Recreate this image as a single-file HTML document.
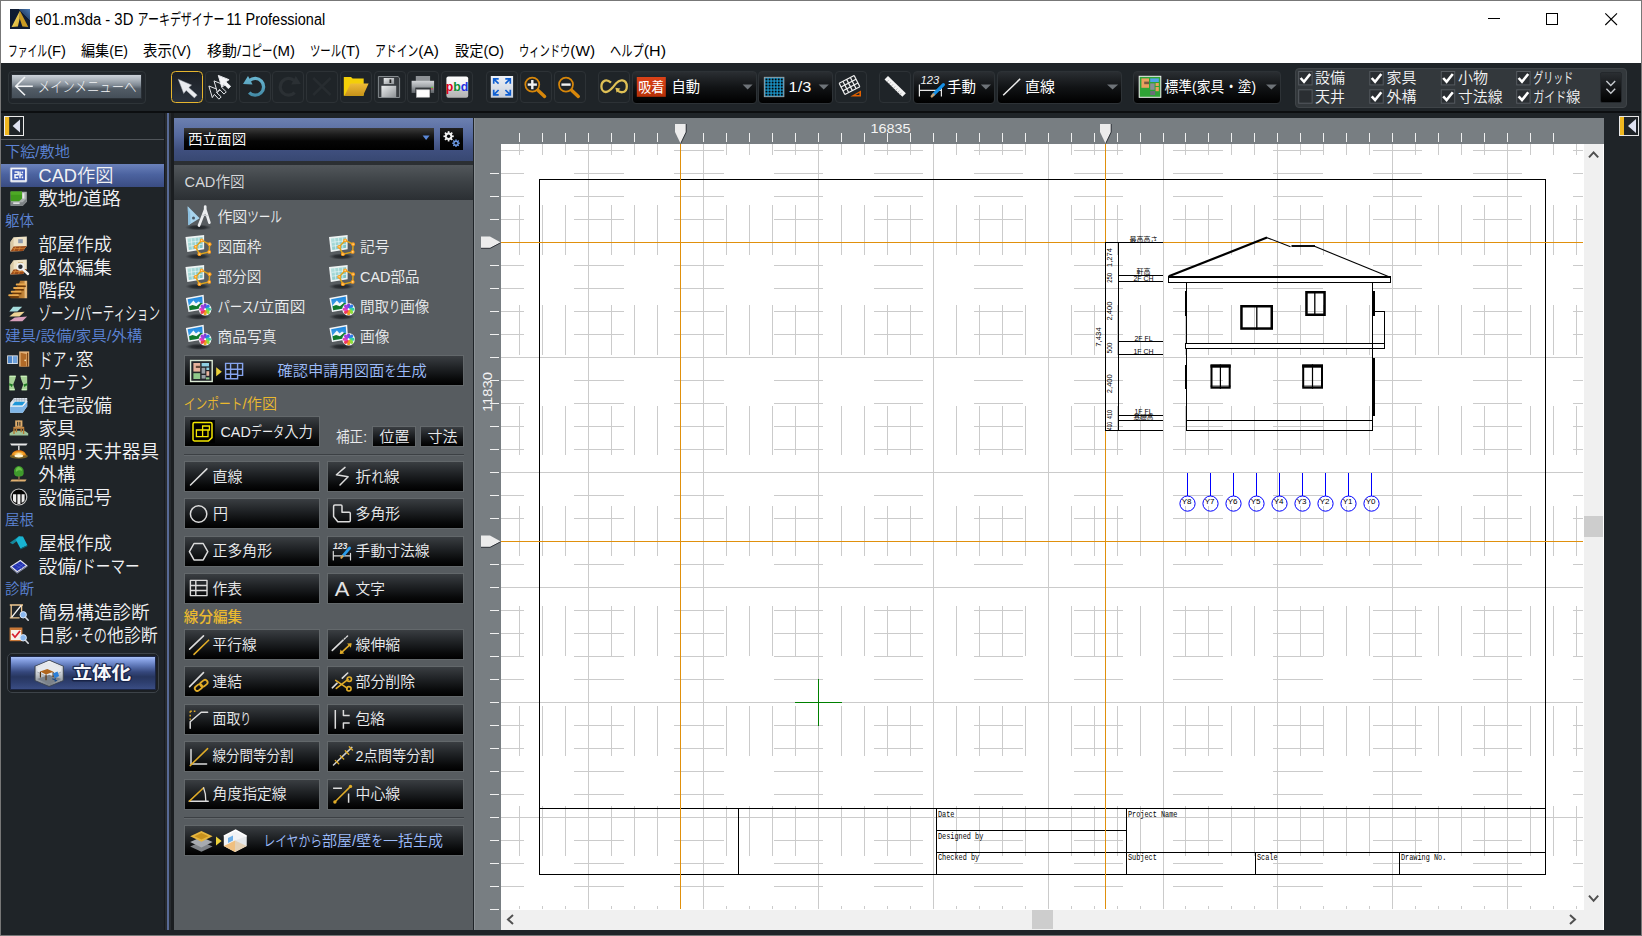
<!DOCTYPE html>
<html lang="ja"><head><meta charset="utf-8"><title>e01.m3da - 3D アーキデザイナー11 Professional</title>
<style>
html,body{margin:0;padding:0;background:#1f2428;}
#root{position:relative;width:1642px;height:936px;overflow:hidden;font-family:"Liberation Sans","Noto Sans CJK JP",sans-serif;}
#root div{position:absolute;}
svg{position:absolute;left:0;top:0;}
text{font-family:"Liberation Sans","Noto Sans CJK JP",sans-serif;white-space:pre;}
.mono{font-family:"Liberation Mono","IPAGothic",monospace;}
.btn{background:linear-gradient(#3a3e42,#202326 40%,#08090a 80%,#000);border:1px solid #63686b;box-sizing:border-box;}
.tb{border:1px solid #2d3236;border-radius:4px;box-sizing:border-box;background:#1f2428;}
.dd{border:1px solid #2d3236;border-radius:4px;box-sizing:border-box;background:linear-gradient(#2a2e32,#111315 50%,#000);}
</style></head><body><div id="root">
<div class="" style="left:0px;top:0px;width:1642px;height:936px;background:#1f2428"></div>
<div class="" style="left:0px;top:0px;width:1642px;height:63px;background:#fff"></div>
<div class="" style="left:1px;top:63px;width:1640px;height:50px;background:#1f2428"></div>
<div class="" style="left:1px;top:111px;width:1640px;height:2px;background:#0c0e10"></div>
<div class="" style="left:8px;top:71px;width:138px;height:33px;border:1px solid #2e3438;border-radius:4px;box-sizing:border-box;background:#20252a"></div>
<div class="" style="left:11.4px;top:74.4px;width:130.2px;height:25px;background:linear-gradient(#ccd2d9,#aab2ba 22%,#7f8993 45%,#525c66 60%,#444e58);border:1px solid #2a3036;box-sizing:border-box"></div>
<div class="" style="left:171px;top:71px;width:32px;height:32px;border:1.5px solid #e6b52e;border-radius:4.5px;box-sizing:border-box;background:linear-gradient(#1b1f25,#2a323d)"></div>
<div class="tb" style="left:204.8px;top:71px;width:32px;height:32px;"></div>
<div class="tb" style="left:238.5px;top:71px;width:32px;height:32px;"></div>
<div class="tb" style="left:272.3px;top:71px;width:32px;height:32px;"></div>
<div class="tb" style="left:306.3px;top:71px;width:32px;height:32px;"></div>
<div class="tb" style="left:339.6px;top:71px;width:32px;height:32px;"></div>
<div class="tb" style="left:373.5px;top:71px;width:32px;height:32px;"></div>
<div class="tb" style="left:407.2px;top:71px;width:32px;height:32px;"></div>
<div class="tb" style="left:441.2px;top:71px;width:32px;height:32px;"></div>
<div class="tb" style="left:486.3px;top:71px;width:32px;height:32px;"></div>
<div class="tb" style="left:519.8px;top:71px;width:32px;height:32px;"></div>
<div class="tb" style="left:553.5px;top:71px;width:32px;height:32px;"></div>
<div class="tb" style="left:598.2px;top:71px;width:32px;height:32px;"></div>
<div class="tb" style="left:834.5px;top:71px;width:32px;height:32px;"></div>
<div class="tb" style="left:879.3px;top:71px;width:32px;height:32px;"></div>
<div class="dd" style="left:631.5px;top:70.5px;width:125.20000000000005px;height:33px;"></div>
<div class="dd" style="left:757.6px;top:70.5px;width:75.39999999999998px;height:33px;"></div>
<div class="dd" style="left:912.5px;top:70.5px;width:82.70000000000005px;height:33px;"></div>
<div class="dd" style="left:996.5px;top:70.5px;width:125.79999999999995px;height:33px;"></div>
<div class="dd" style="left:1133.4px;top:70.5px;width:148.0999999999999px;height:33px;"></div>
<div class="" style="left:1294.5px;top:68px;width:332.5px;height:40px;background:#33383c;border:1px solid #3f4448;border-radius:4px;box-sizing:border-box"></div>
<div class="" style="left:1599.5px;top:72px;width:22.5px;height:30.5px;background:linear-gradient(#2a2e32,#000);border:1px solid #24282c;box-sizing:border-box;border-radius:2px"></div>
<div class="" style="left:1px;top:113px;width:163px;height:817px;background:#1f2428"></div>
<div class="" style="left:164px;top:113px;width:10px;height:817px;background:linear-gradient(90deg,#171a1d 0,#171a1d 1.2px,#262a2e 1.2px,#262a2e 3px,#52648f 3px,#5d709c 4px,#52648f 5px,#272b2f 5px,#272b2f 7.2px,#1a1d20 7.2px)"></div>
<div class="" style="left:1px;top:139px;width:163px;height:1px;background:#50555a"></div>
<div class="" style="left:1px;top:164px;width:163px;height:23px;background:linear-gradient(#6b82bb,#4c63a0 45%,#3a4c82)"></div>
<div class="" style="left:7px;top:653px;width:152.4px;height:40px;border:1.2px solid #3d4349;border-radius:5px;box-sizing:border-box;background:#1b1f23"></div>
<div class="" style="left:10.3px;top:656.3px;width:145.4px;height:33.5px;background:linear-gradient(#a9c1f7 0,#86a0e2 10%,#5d76b6 27%,#35477c 47%,#27365f 62%,#2e3f6f 80%,#3a4d84 100%);border:1px solid #1c2644;box-sizing:border-box"></div>
<div class="" style="left:174px;top:118px;width:298.7px;height:812px;background:#575c60"></div>
<div class="" style="left:174px;top:118px;width:298.7px;height:42.5px;background:linear-gradient(#6c80b0,#566a9f 40%,#3f4f7e 75%,#384872)"></div>
<div class="" style="left:174px;top:160.5px;width:298.7px;height:4.5px;background:#2b2f33"></div>
<div class="" style="left:174px;top:164.5px;width:298.7px;height:35.5px;background:linear-gradient(#52575b,#3c4145 50%,#2b2f33)"></div>
<div class="" style="left:183.8px;top:128px;width:250px;height:22px;background:linear-gradient(#3c3c3c,#1c1c1c 30%,#050505 60%,#000)"></div>
<div class="" style="left:440px;top:128px;width:22.6px;height:22px;background:linear-gradient(#202020,#050505 50%,#000)"></div>
<div class="btn" style="left:184px;top:355px;width:279.8px;height:31px;"></div>
<div class="btn" style="left:184px;top:416px;width:136.4px;height:31px;"></div>
<div class="btn" style="left:372px;top:426px;width:44.2px;height:21px;"></div>
<div class="btn" style="left:420.4px;top:426px;width:43.6px;height:21px;"></div>
<div class="" style="left:184px;top:453.5px;width:280px;height:1px;background:#3c4044"></div>
<div class="" style="left:184px;top:454.5px;width:280px;height:1px;background:#63686c"></div>
<div class="btn" style="left:184px;top:461px;width:136.4px;height:31px;"></div>
<div class="btn" style="left:327.4px;top:461px;width:136.4px;height:31px;"></div>
<div class="btn" style="left:184px;top:498px;width:136.4px;height:31px;"></div>
<div class="btn" style="left:327.4px;top:498px;width:136.4px;height:31px;"></div>
<div class="btn" style="left:184px;top:536px;width:136.4px;height:31px;"></div>
<div class="btn" style="left:327.4px;top:536px;width:136.4px;height:31px;"></div>
<div class="btn" style="left:184px;top:573px;width:136.4px;height:31px;"></div>
<div class="btn" style="left:327.4px;top:573px;width:136.4px;height:31px;"></div>
<div class="btn" style="left:184px;top:629px;width:136.4px;height:31px;"></div>
<div class="btn" style="left:327.4px;top:629px;width:136.4px;height:31px;"></div>
<div class="btn" style="left:184px;top:666px;width:136.4px;height:31px;"></div>
<div class="btn" style="left:327.4px;top:666px;width:136.4px;height:31px;"></div>
<div class="btn" style="left:184px;top:704px;width:136.4px;height:31px;"></div>
<div class="btn" style="left:327.4px;top:704px;width:136.4px;height:31px;"></div>
<div class="btn" style="left:184px;top:741px;width:136.4px;height:31px;"></div>
<div class="btn" style="left:327.4px;top:741px;width:136.4px;height:31px;"></div>
<div class="btn" style="left:184px;top:779px;width:136.4px;height:31px;"></div>
<div class="btn" style="left:327.4px;top:779px;width:136.4px;height:31px;"></div>
<div class="" style="left:184px;top:816.8px;width:280px;height:1px;background:#3c4044"></div>
<div class="" style="left:184px;top:817.8px;width:280px;height:1px;background:#63686c"></div>
<div class="btn" style="left:184px;top:825px;width:279.6px;height:31px;"></div>
<div class="" style="left:474px;top:118px;width:1130px;height:26px;background:#787e82"></div>
<div class="" style="left:474px;top:118px;width:27px;height:812px;background:#787e82"></div>
<div class="" style="left:474px;top:118px;width:1px;height:812px;background:#8b9195"></div>
<div class="" style="left:501px;top:144px;width:1083px;height:766px;background:#fff"></div>
<div class="" style="left:501px;top:909px;width:1103px;height:21px;background:#fff"></div>
<div class="" style="left:1584px;top:144px;width:20px;height:786px;background:#fff"></div>
<div class="" style="left:1584px;top:144px;width:19.4px;height:785.5px;background:#f0f0f0"></div>
<div class="" style="left:501px;top:910px;width:1102.4px;height:19.5px;background:#f0f0f0"></div>
<div class="" style="left:1584px;top:516px;width:19px;height:21px;background:#cdcdcd"></div>
<div class="" style="left:1032px;top:910px;width:21px;height:19px;background:#cdcdcd"></div>
<div class="" style="left:1604px;top:113px;width:37px;height:823px;background:#1f2428"></div>
<div class="" style="left:1px;top:930px;width:1603px;height:6px;background:#1f2428"></div>
<svg width="1642" height="936" viewBox="0 0 1642 936">
<defs><linearGradient id="gAi" x1="1" y1="0" x2=".35" y2=".65"><stop offset="0" stop-color="#4a7ab4"/><stop offset=".45" stop-color="#2a4870"/><stop offset=".46" stop-color="#111d33"/><stop offset="1" stop-color="#0e1a30"/></linearGradient>
<linearGradient id="gAl" x1="0" y1="0" x2="1" y2="1"><stop offset="0" stop-color="#f6e578"/><stop offset="1" stop-color="#d9ab2c"/></linearGradient>
<linearGradient id="gUndo" gradientUnits="userSpaceOnUse" x1="0" y1="-11" x2="0" y2="11"><stop offset="0" stop-color="#6cb9d4"/><stop offset="1" stop-color="#3f86a2"/></linearGradient>
<linearGradient id="gFo" x1="0" y1="0" x2="0" y2="1"><stop offset="0" stop-color="#eebc38"/><stop offset="1" stop-color="#c8921a"/></linearGradient>
<linearGradient id="gFl" x1="0" y1="0" x2="1" y2="1"><stop offset="0" stop-color="#eceeef"/><stop offset="1" stop-color="#8e9296"/></linearGradient>
<linearGradient id="gPr" x1="0" y1="0" x2="0" y2="1"><stop offset="0" stop-color="#d2d5d8"/><stop offset=".45" stop-color="#a3a7ab"/><stop offset="1" stop-color="#5c6166"/></linearGradient>
<linearGradient id="gPb" x1="0" y1="0" x2="0" y2="1"><stop offset="0" stop-color="#fdfdfd"/><stop offset=".62" stop-color="#ececec"/><stop offset=".66" stop-color="#c4c4c4"/><stop offset="1" stop-color="#b4b4b4"/></linearGradient>
<linearGradient id="gFi" x1="0" y1="0" x2="0" y2="1"><stop offset="0" stop-color="#eef1f6"/><stop offset="1" stop-color="#c6cedb"/></linearGradient>
<linearGradient id="gRed" x1="0" y1="0" x2="0" y2="1"><stop offset="0" stop-color="#dc4218"/><stop offset="1" stop-color="#b63008"/></linearGradient>
<linearGradient id="gSt" x1="0" y1="0" x2="1" y2="0"><stop offset="0" stop-color="#8a4e14"/><stop offset=".8" stop-color="#c4873a"/><stop offset=".93" stop-color="#f2cf9a"/><stop offset="1" stop-color="#c4873a"/></linearGradient>
<radialGradient id="gLamp" cx=".5" cy=".7" r=".7"><stop offset="0" stop-color="#fff3b0"/><stop offset=".5" stop-color="#f09a20"/><stop offset="1" stop-color="#c8600c"/></radialGradient>
<linearGradient id="gHex" x1="0" y1="0" x2="0" y2="1"><stop offset="0" stop-color="#f2f4f6"/><stop offset=".5" stop-color="#c9ced4"/><stop offset="1" stop-color="#6f767e"/></linearGradient>
<radialGradient id="gSh"><stop offset="0" stop-color="#1f2327"/><stop offset=".55" stop-color="#2a2e32" stop-opacity=".9"/><stop offset="1" stop-color="#3a3e42" stop-opacity="0"/></radialGradient>
<linearGradient id="gSheet" x1="0" y1="0" x2="1" y2="1"><stop offset="0" stop-color="#bfe6e4"/><stop offset="1" stop-color="#6fbcbc"/></linearGradient>
<linearGradient id="gSky" x1="0" y1="0" x2="0" y2="1"><stop offset="0" stop-color="#1c84dc"/><stop offset="1" stop-color="#58b4f0"/></linearGradient></defs>
<g><rect x="10" y="9" width="20" height="20" fill="url(#gAi)"/><path d="M19.9 10.8 L11.6 27 L17.9 26.6 L19.7 18.6 Z" fill="url(#gAl)"/><path d="M19.9 10.8 L19.7 18.6 L22.4 26.6 L28.3 27 Z" fill="#c99a22"/></g>
<text y="24.82" font-size="15.6" fill="#000"><tspan x="35.1" textLength="102.4" lengthAdjust="spacingAndGlyphs">e01.m3da - 3D </tspan><tspan x="137.6" textLength="87" lengthAdjust="spacingAndGlyphs">アーキデザイナー</tspan><tspan x="226.5" textLength="98.7" lengthAdjust="spacingAndGlyphs">11 Professional</tspan></text>
<line x1="1488" y1="18.5" x2="1500" y2="18.5" stroke="#000" stroke-width="1" />
<rect x="1546.5" y="13.5" width="11" height="11" fill="none" stroke="#000" stroke-width="1"/>
<path d="M1605.3 13.3 L1617 25 M1617 13.3 L1605.3 25" stroke="#000" stroke-width="1.1" fill="none"/>
<text y="55.7" font-size="15" fill="#000"><tspan x="8" textLength="39.14" lengthAdjust="spacingAndGlyphs">ファイル</tspan><tspan x="47.14" textLength="18.86" lengthAdjust="spacingAndGlyphs">(F)</tspan></text>
<text y="55.7" font-size="15" fill="#000"><tspan x="81" textLength="28.2" lengthAdjust="spacingAndGlyphs">編集</tspan><tspan x="109.2" textLength="18.8" lengthAdjust="spacingAndGlyphs">(E)</tspan></text>
<text y="55.7" font-size="15" fill="#000"><tspan x="143" textLength="28.8" lengthAdjust="spacingAndGlyphs">表示</tspan><tspan x="171.8" textLength="19.2" lengthAdjust="spacingAndGlyphs">(V)</tspan></text>
<text y="55.7" font-size="15" fill="#000"><tspan x="207" textLength="29.95" lengthAdjust="spacingAndGlyphs">移動</tspan><tspan x="236.95" textLength="4.16" lengthAdjust="spacingAndGlyphs">/</tspan><tspan x="241.11" textLength="31.45" lengthAdjust="spacingAndGlyphs">コピー</tspan><tspan x="272.56" textLength="22.45" lengthAdjust="spacingAndGlyphs">(M)</tspan></text>
<text y="55.7" font-size="15" fill="#000"><tspan x="310" textLength="31.1" lengthAdjust="spacingAndGlyphs">ツール</tspan><tspan x="341.1" textLength="18.9" lengthAdjust="spacingAndGlyphs">(T)</tspan></text>
<text y="55.7" font-size="15" fill="#000"><tspan x="375" textLength="43.36" lengthAdjust="spacingAndGlyphs">アドイン</tspan><tspan x="418.36" textLength="20.64" lengthAdjust="spacingAndGlyphs">(A)</tspan></text>
<text y="55.7" font-size="15" fill="#000"><tspan x="455" textLength="28.46" lengthAdjust="spacingAndGlyphs">設定</tspan><tspan x="483.46" textLength="20.54" lengthAdjust="spacingAndGlyphs">(O)</tspan></text>
<text y="55.7" font-size="15" fill="#000"><tspan x="519" textLength="51.33" lengthAdjust="spacingAndGlyphs">ウィンドウ</tspan><tspan x="570.33" textLength="24.67" lengthAdjust="spacingAndGlyphs">(W)</tspan></text>
<text y="55.7" font-size="15" fill="#000"><tspan x="610" textLength="33.71" lengthAdjust="spacingAndGlyphs">ヘルプ</tspan><tspan x="643.71" textLength="22.29" lengthAdjust="spacingAndGlyphs">(H)</tspan></text>
<path d="M32.8 86.2 H16.4 M25 77 L15.8 86.2 L25 95.2" fill="none" stroke="#f1f3f5" stroke-width="1.6"/>
<text x="37.8" y="92.0" font-size="15" fill="#f2f4f6" textLength="98.7" lengthAdjust="spacingAndGlyphs" font-weight="300" >メインメニューへ</text>
<path d="M178.2 79.2 L191.6 85 L188.8 87.6 L197.2 95 L194.4 97.9 L186.2 90.4 L183.7 93.5 Z" fill="#e9ebef" stroke="#9aa0a8" stroke-width=".5"/>
<path d="M208.9 86.0 L219.7 90.3 L216.4 92.4 L221.2 96.9 L218.9 99.2 L214.4 94.4 L212.3 97.6 Z" fill="#1f2428" stroke="#e6e8ec" stroke-width="1"/>
<path d="M214.0 80.9 L224.8 85.2 L221.5 87.3 L226.3 91.8 L224.0 94.1 L219.5 89.3 L217.4 92.5 Z" fill="#1f2428" stroke="#e6e8ec" stroke-width="1"/>
<path d="M218.3 75.4 L229.1 79.7 L225.8 81.8 L230.6 86.3 L228.3 88.6 L223.8 83.8 L221.7 87.0 Z" fill="#f4f5f7" stroke="#e6e8ec" stroke-width="1"/>
<g transform="translate(255.2,86.8)"><path d="M-5.62 -6.24 A8.4 8.4 0 1 1 -6.04 5.84" fill="none" stroke="url(#gUndo)" stroke-width="3.3"/><path d="M-12.2 -2.8 L-7.2 -10.8 L-2.6 -2.4 Z" fill="url(#gUndo)"/></g>
<g transform="translate(288.6,86.8) scale(-1,1)"><path d="M-5.62 -6.24 A8.4 8.4 0 1 1 -6.04 5.84" fill="none" stroke="#2b3034" stroke-width="3.3"/><path d="M-12.2 -2.8 L-7.2 -10.8 L-2.6 -2.4 Z" fill="#2b3034"/></g>
<path d="M313.2 78 L330.6 95 M330.6 78 L313.2 95" stroke="#272c30" stroke-width="2.6" fill="none"/>
<path d="M343.8 77 H351 L352.6 78.6 H363.7 V95.8 H343.8 Z" fill="#f3cf08"/><path d="M350.6 83.4 H368.6 L363 95.8 H344.4 Z" fill="url(#gFo)"/>
<path d="M378.4 76.5 H398 L399.6 78 V97.5 H378.4 Z" fill="#373b3f" stroke="#858a8e" stroke-width="1"/><rect x="383.7" y="78" width="10.4" height="6.1" fill="url(#gFl)"/><rect x="389.5" y="79.4" width="1.8" height="3.6" fill="#222"/><rect x="381.4" y="85.8" width="14.8" height="11.2" fill="url(#gFl)"/>
<rect x="415.8" y="76" width="14.3" height="5" fill="#8d9195"/><rect x="411.6" y="80.8" width="22.5" height="12.2" fill="url(#gPr)"/><rect x="415.3" y="87.6" width="15.6" height="5.6" fill="#33373b"/><rect x="416.6" y="89.8" width="13" height="7.4" fill="#fff" stroke="#c9c9c9" stroke-width=".6"/><rect x="431.3" y="86.8" width="1.6" height="1.2" fill="#58d030"/><rect x="431.3" y="88.2" width="1.6" height="1.2" fill="#d03048"/>
<rect x="446.4" y="76.4" width="21.8" height="21.3" rx="2" fill="url(#gPb)"/>
<text x="445.8" y="90.6" font-size="13.5" font-weight="bold" textLength="22.6" lengthAdjust="spacingAndGlyphs"><tspan fill="#e1001a">p</tspan><tspan fill="#0e8f35">b</tspan><tspan fill="#2431e0">d</tspan></text>
<rect x="490.8" y="76" width="22.3" height="21.7" fill="url(#gFi)"/><g fill="none" stroke="#0f5fd2" stroke-width="1.7"><path d="M498.6 83.6 L493.7 78.8 M498.7 78.8 H493.7 V83.8"/><path d="M505.4 83.6 L510.3 78.8 M505.3 78.8 H510.3 V83.8"/><path d="M498.6 90.0 L493.7 94.8 M498.7 94.8 H493.7 V89.8"/><path d="M505.4 90.0 L510.3 94.8 M505.3 94.8 H510.3 V89.8"/></g>
<circle cx="532.3" cy="84.6" r="7" fill="#1f2428" stroke="#d8870a" stroke-width="1.7"/><path d="M537.9 90.19999999999999 L544.5999999999999 96.39999999999999" stroke="#d8870a" stroke-width="3.4" stroke-linecap="round"/><path d="M527.6999999999999 84.6 H536.9" stroke="#f2f2f2" stroke-width="2.4"/><path d="M532.3 80.0 V89.19999999999999" stroke="#f2f2f2" stroke-width="2.4"/>
<circle cx="566" cy="84.6" r="7" fill="#1f2428" stroke="#d8870a" stroke-width="1.7"/><path d="M571.6 90.19999999999999 L578.3 96.39999999999999" stroke="#d8870a" stroke-width="3.4" stroke-linecap="round"/><path d="M561.4 84.6 H570.6" stroke="#f2f2f2" stroke-width="2.4"/>
<path d="M611 82.6 C608.8 80.6 606.8 80 605 80.6 C602.6 81.4 601.4 83.8 601.4 86.4 C601.4 89.2 603 91.8 605.6 92 C608 92.2 610 90.6 612.6 87.6 L616 83.4 C618 81 620 79.9 622.4 80.4 C625.2 81 626.8 83.6 626.8 86.4 C626.8 89.4 625.2 91.9 622.4 92.2 C620.6 92.4 619 91.8 617.4 90.4" fill="none" stroke="#dfc055" stroke-width="2.3"/><path d="M615.4 87.8 L620.4 88.6 L616.6 92.8 Z" fill="#dfc055"/>
<rect x="636.8" y="77" width="29" height="19.8" fill="url(#gRed)" />
<text x="638.3" y="91.94" font-size="14" fill="#fff" textLength="26" lengthAdjust="spacingAndGlyphs" >吸着</text>
<text x="671.4" y="92.0" font-size="15" fill="#fff" textLength="28.6" lengthAdjust="spacingAndGlyphs" >自動</text>
<path d="M742.6 84.4 H752.6 L747.6 89.4 Z" fill="#6e7378"/>
<rect x="764.3" y="77.3" width="19.6" height="19.4" fill="#1ea7e2" stroke="#9ea2a6" stroke-width=".9"/><g fill="#050505"><rect x="765.50" y="78.50" width="2" height="2"/><rect x="765.50" y="81.52" width="2" height="2"/><rect x="765.50" y="84.54" width="2" height="2"/><rect x="765.50" y="87.56" width="2" height="2"/><rect x="765.50" y="90.58" width="2" height="2"/><rect x="765.50" y="93.60" width="2" height="2"/><rect x="768.55" y="78.50" width="2" height="2"/><rect x="768.55" y="81.52" width="2" height="2"/><rect x="768.55" y="84.54" width="2" height="2"/><rect x="768.55" y="87.56" width="2" height="2"/><rect x="768.55" y="90.58" width="2" height="2"/><rect x="768.55" y="93.60" width="2" height="2"/><rect x="771.60" y="78.50" width="2" height="2"/><rect x="771.60" y="81.52" width="2" height="2"/><rect x="771.60" y="84.54" width="2" height="2"/><rect x="771.60" y="87.56" width="2" height="2"/><rect x="771.60" y="90.58" width="2" height="2"/><rect x="771.60" y="93.60" width="2" height="2"/><rect x="774.65" y="78.50" width="2" height="2"/><rect x="774.65" y="81.52" width="2" height="2"/><rect x="774.65" y="84.54" width="2" height="2"/><rect x="774.65" y="87.56" width="2" height="2"/><rect x="774.65" y="90.58" width="2" height="2"/><rect x="774.65" y="93.60" width="2" height="2"/><rect x="777.70" y="78.50" width="2" height="2"/><rect x="777.70" y="81.52" width="2" height="2"/><rect x="777.70" y="84.54" width="2" height="2"/><rect x="777.70" y="87.56" width="2" height="2"/><rect x="777.70" y="90.58" width="2" height="2"/><rect x="777.70" y="93.60" width="2" height="2"/><rect x="780.75" y="78.50" width="2" height="2"/><rect x="780.75" y="81.52" width="2" height="2"/><rect x="780.75" y="84.54" width="2" height="2"/><rect x="780.75" y="87.56" width="2" height="2"/><rect x="780.75" y="90.58" width="2" height="2"/><rect x="780.75" y="93.60" width="2" height="2"/></g>
<text x="788.6" y="92.38" font-size="15.5" fill="#fff" textLength="22.6" lengthAdjust="spacingAndGlyphs" >1/3</text>
<path d="M818.6 84.4 H828.8 L823.7 89.4 Z" fill="#6e7378"/>
<g transform="translate(849.5,85) rotate(-27)" stroke="#f1f1f1" stroke-width="1.2" fill="none"><line x1="-8.4" y1="-6.3" x2="-8.4" y2="6.3"/><line x1="-4.2" y1="-6.3" x2="-4.2" y2="6.3"/><line x1="0.0" y1="-6.3" x2="0.0" y2="6.3"/><line x1="4.200000000000001" y1="-6.3" x2="4.200000000000001" y2="6.3"/><line x1="8.4" y1="-6.3" x2="8.4" y2="6.3"/><line x1="-8.4" y1="-6.3" x2="8.4" y2="-6.3"/><line x1="-8.4" y1="-2.0999999999999996" x2="8.4" y2="-2.0999999999999996"/><line x1="-8.4" y1="2.1000000000000005" x2="8.4" y2="2.1000000000000005"/><line x1="-8.4" y1="6.300000000000002" x2="8.4" y2="6.300000000000002"/></g><path d="M850.4 96.6 H861 V90.4 Z" fill="#e26100"/><path d="M855.4 95 H859.4 V92.8 Z" fill="#1f2428"/>
<g transform="translate(895.2,86.4) rotate(44)"><rect x="-12.4" y="-2.5" width="24.8" height="5" fill="#f3f3f3"/><line x1="-9" y1="0" x2="-9" y2="2.5" stroke="#b5b5b5" stroke-width=".9"/><line x1="-6" y1="0" x2="-6" y2="2.5" stroke="#b5b5b5" stroke-width=".9"/><line x1="-3" y1="0" x2="-3" y2="2.5" stroke="#b5b5b5" stroke-width=".9"/><line x1="0" y1="0" x2="0" y2="2.5" stroke="#b5b5b5" stroke-width=".9"/><line x1="3" y1="0" x2="3" y2="2.5" stroke="#b5b5b5" stroke-width=".9"/><line x1="6" y1="0" x2="6" y2="2.5" stroke="#b5b5b5" stroke-width=".9"/><line x1="9" y1="0" x2="9" y2="2.5" stroke="#b5b5b5" stroke-width=".9"/></g>
<text x="920.6" y="83.8" font-size="10.5" font-style="italic" fill="#f3f3f3" textLength="18.6" lengthAdjust="spacingAndGlyphs">123</text>
<path d="M919.4 84.6 V96.6 M941.4 88 V96.6 M919.4 90.4 H941.4" stroke="#e9e9e9" stroke-width="1.2" fill="none"/><path d="M943.4 84.6 L933.4 94.6" stroke="#1590e6" stroke-width="3.2" stroke-linecap="round"/><path d="M933.6 94.4 L931.8 96.4" stroke="#c8a070" stroke-width="2.4" stroke-linecap="round"/>
<text x="947" y="91.9" font-size="15" fill="#fff" textLength="29" lengthAdjust="spacingAndGlyphs" >手動</text>
<path d="M980.8 84.4 H991 L985.9 89.4 Z" fill="#6e7378"/>
<path d="M1003.2 95.2 L1020.2 78.8" stroke="#ededed" stroke-width="1.5"/>
<text x="1024.9" y="91.9" font-size="15" fill="#fff" textLength="30" lengthAdjust="spacingAndGlyphs" >直線</text>
<path d="M1107 84.4 H1118.2 L1112.6 89.4 Z" fill="#6e7378"/>
<rect x="1139.2" y="76.3" width="21.6" height="21" fill="#2fa336" stroke="#f4f4f4" stroke-width="1"/><rect x="1141.4" y="78.4" width="7.6" height="9.4" fill="#eba05e"/><rect x="1144.2" y="81.6" width="4.8" height="2.6" fill="#7a5a40"/><rect x="1150.2" y="78.4" width="8.6" height="3.6" fill="#4fa2ea"/><rect x="1155.6" y="83" width="3.2" height="3" fill="#eba05e"/><rect x="1150.2" y="83.4" width="4.4" height="6.4" fill="#8a8f98"/><rect x="1155.6" y="87" width="3.2" height="4.2" fill="#eba05e"/><rect x="1150.2" y="91" width="5" height="4" fill="#6a7078"/>
<text x="1164.6" y="91.9" font-size="15" fill="#fff" textLength="91.6" lengthAdjust="spacingAndGlyphs" >標準(家具・塗)</text>
<path d="M1266 84.4 H1276.8 L1271.4 89.4 Z" fill="#6e7378"/>
<rect x="1298.7" y="71.5" width="13.4" height="13.4" fill="#2a2e32" stroke="#565b60" stroke-width="1"/>
<path d="M1300.6000000000001 78.0 L1304.0 81.8 L1310.2 74.0" fill="none" stroke="#fff" stroke-width="2.6"/>
<text y="83.42" font-size="14.5" fill="#f4f4f4" font-weight="350"><tspan x="1315" textLength="30.0" lengthAdjust="spacingAndGlyphs">設備</tspan></text>
<rect x="1298.7" y="89.8" width="13.4" height="13.4" fill="#2a2e32" stroke="#565b60" stroke-width="1"/>
<text y="101.72" font-size="14.5" fill="#f4f4f4" font-weight="350"><tspan x="1315" textLength="30.0" lengthAdjust="spacingAndGlyphs">天井</tspan></text>
<rect x="1369.8" y="71.5" width="13.4" height="13.4" fill="#2a2e32" stroke="#565b60" stroke-width="1"/>
<path d="M1371.7 78.0 L1375.1 81.8 L1381.3 74.0" fill="none" stroke="#fff" stroke-width="2.6"/>
<text y="83.42" font-size="14.5" fill="#f4f4f4" font-weight="350"><tspan x="1386.5" textLength="30.0" lengthAdjust="spacingAndGlyphs">家具</tspan></text>
<rect x="1369.8" y="89.8" width="13.4" height="13.4" fill="#2a2e32" stroke="#565b60" stroke-width="1"/>
<path d="M1371.7 96.3 L1375.1 100.1 L1381.3 92.3" fill="none" stroke="#fff" stroke-width="2.6"/>
<text y="101.72" font-size="14.5" fill="#f4f4f4" font-weight="350"><tspan x="1386.5" textLength="30.0" lengthAdjust="spacingAndGlyphs">外構</tspan></text>
<rect x="1441.3" y="71.5" width="13.4" height="13.4" fill="#2a2e32" stroke="#565b60" stroke-width="1"/>
<path d="M1443.2 78.0 L1446.6 81.8 L1452.8 74.0" fill="none" stroke="#fff" stroke-width="2.6"/>
<text y="83.42" font-size="14.5" fill="#f4f4f4" font-weight="350"><tspan x="1458" textLength="30.0" lengthAdjust="spacingAndGlyphs">小物</tspan></text>
<rect x="1441.3" y="89.8" width="13.4" height="13.4" fill="#2a2e32" stroke="#565b60" stroke-width="1"/>
<path d="M1443.2 96.3 L1446.6 100.1 L1452.8 92.3" fill="none" stroke="#fff" stroke-width="2.6"/>
<text y="101.72" font-size="14.5" fill="#f4f4f4" font-weight="350"><tspan x="1458" textLength="44.5" lengthAdjust="spacingAndGlyphs">寸法線</tspan></text>
<rect x="1516.7" y="71.5" width="13.4" height="13.4" fill="#2a2e32" stroke="#565b60" stroke-width="1"/>
<path d="M1518.6000000000001 78.0 L1522.0 81.8 L1528.2 74.0" fill="none" stroke="#fff" stroke-width="2.6"/>
<text y="83.42" font-size="14.5" fill="#f4f4f4" font-weight="350"><tspan x="1533.2" textLength="40.0" lengthAdjust="spacingAndGlyphs">グリッド</tspan></text>
<rect x="1516.7" y="89.8" width="13.4" height="13.4" fill="#2a2e32" stroke="#565b60" stroke-width="1"/>
<path d="M1518.6000000000001 96.3 L1522.0 100.1 L1528.2 92.3" fill="none" stroke="#fff" stroke-width="2.6"/>
<text y="101.72" font-size="14.5" fill="#f4f4f4" font-weight="350"><tspan x="1533.2" textLength="32.93" lengthAdjust="spacingAndGlyphs">ガイド</tspan><tspan x="1566.13" textLength="14.07" lengthAdjust="spacingAndGlyphs">線</tspan></text>
<path d="M1606.4 81 L1610.8 85.4 L1615.2 81 M1606.4 88.8 L1610.8 93.2 L1615.2 88.8" fill="none" stroke="#c9cdd1" stroke-width="1.4"/>
<g><rect x="4.5" y="116.5" width="19" height="19" fill="#1f2428" stroke="#ececec" stroke-width="1"/><rect x="5" y="117" width="4.2" height="18" fill="#f0b820"/><path d="M20 119.4 L20 132.6 L12.6 126 Z" fill="#dfe3f2"/></g>
<text y="157.32" font-size="14.5" fill="#5d84d6" font-weight="350"><tspan x="5" textLength="30.39" lengthAdjust="spacingAndGlyphs">下絵</tspan><tspan x="35.39" textLength="4.22" lengthAdjust="spacingAndGlyphs">/</tspan><tspan x="39.61" textLength="30.39" lengthAdjust="spacingAndGlyphs">敷地</tspan></text>
<text y="181.72" font-size="18.4" fill="#f1f2f4" font-weight="350"><tspan x="38.5" textLength="38.52" lengthAdjust="spacingAndGlyphs">CAD</tspan><tspan x="77.02" textLength="36.48" lengthAdjust="spacingAndGlyphs">作図</tspan></text>
<text y="204.72" font-size="18.4" fill="#f1f2f4" font-weight="350"><tspan x="38.5" textLength="38.57" lengthAdjust="spacingAndGlyphs">敷地</tspan><tspan x="77.07" textLength="5.36" lengthAdjust="spacingAndGlyphs">/</tspan><tspan x="82.43" textLength="38.57" lengthAdjust="spacingAndGlyphs">道路</tspan></text>
<text y="226.32" font-size="14.5" fill="#5d84d6" font-weight="350"><tspan x="5" textLength="29.0" lengthAdjust="spacingAndGlyphs">躯体</tspan></text>
<text y="250.72" font-size="18.4" fill="#f1f2f4" font-weight="350"><tspan x="38.5" textLength="73.5" lengthAdjust="spacingAndGlyphs">部屋作成</tspan></text>
<text y="273.72" font-size="18.4" fill="#f1f2f4" font-weight="350"><tspan x="38.5" textLength="73.5" lengthAdjust="spacingAndGlyphs">躯体編集</tspan></text>
<text y="296.72" font-size="18.4" fill="#f1f2f4" font-weight="350"><tspan x="38.5" textLength="37.0" lengthAdjust="spacingAndGlyphs">階段</tspan></text>
<text y="319.72" font-size="18.4" fill="#f1f2f4" font-weight="350"><tspan x="38.5" textLength="36.84" lengthAdjust="spacingAndGlyphs">ゾーン</tspan><tspan x="75.34" textLength="4.37" lengthAdjust="spacingAndGlyphs">/</tspan><tspan x="79.71" textLength="80.29" lengthAdjust="spacingAndGlyphs">パーティション</tspan></text>
<text y="341.32" font-size="14.5" fill="#5d84d6" font-weight="350"><tspan x="5" textLength="31.09" lengthAdjust="spacingAndGlyphs">建具</tspan><tspan x="36.09" textLength="4.32" lengthAdjust="spacingAndGlyphs">/</tspan><tspan x="40.41" textLength="31.09" lengthAdjust="spacingAndGlyphs">設備</tspan><tspan x="71.5" textLength="4.32" lengthAdjust="spacingAndGlyphs">/</tspan><tspan x="75.82" textLength="31.09" lengthAdjust="spacingAndGlyphs">家具</tspan><tspan x="106.91" textLength="4.32" lengthAdjust="spacingAndGlyphs">/</tspan><tspan x="111.23" textLength="31.09" lengthAdjust="spacingAndGlyphs">外構</tspan></text>
<text y="365.72" font-size="18.4" fill="#f1f2f4" font-weight="350"><tspan x="38.5" textLength="28.04" lengthAdjust="spacingAndGlyphs">ドア</tspan><tspan x="66.54" textLength="8.99" lengthAdjust="spacingAndGlyphs">・</tspan><tspan x="75.53" textLength="17.97" lengthAdjust="spacingAndGlyphs">窓</tspan></text>
<text y="388.72" font-size="18.4" fill="#f1f2f4" font-weight="350"><tspan x="38.5" textLength="55.0" lengthAdjust="spacingAndGlyphs">カーテン</tspan></text>
<text y="411.72" font-size="18.4" fill="#f1f2f4" font-weight="350"><tspan x="38.5" textLength="73.5" lengthAdjust="spacingAndGlyphs">住宅設備</tspan></text>
<text y="434.72" font-size="18.4" fill="#f1f2f4" font-weight="350"><tspan x="38.5" textLength="37.0" lengthAdjust="spacingAndGlyphs">家具</tspan></text>
<text y="457.72" font-size="18.4" fill="#f1f2f4" font-weight="350"><tspan x="38.5" textLength="37.08" lengthAdjust="spacingAndGlyphs">照明</tspan><tspan x="75.58" textLength="9.27" lengthAdjust="spacingAndGlyphs">・</tspan><tspan x="84.85" textLength="74.15" lengthAdjust="spacingAndGlyphs">天井器具</tspan></text>
<text y="480.72" font-size="18.4" fill="#f1f2f4" font-weight="350"><tspan x="38.5" textLength="37.0" lengthAdjust="spacingAndGlyphs">外構</tspan></text>
<text y="503.72" font-size="18.4" fill="#f1f2f4" font-weight="350"><tspan x="38.5" textLength="73.5" lengthAdjust="spacingAndGlyphs">設備記号</tspan></text>
<text y="525.32" font-size="14.5" fill="#5d84d6" font-weight="350"><tspan x="5" textLength="29.0" lengthAdjust="spacingAndGlyphs">屋根</tspan></text>
<text y="549.72" font-size="18.4" fill="#f1f2f4" font-weight="350"><tspan x="38.5" textLength="73.5" lengthAdjust="spacingAndGlyphs">屋根作成</tspan></text>
<text y="572.72" font-size="18.4" fill="#f1f2f4" font-weight="350"><tspan x="38.5" textLength="37.5" lengthAdjust="spacingAndGlyphs">設備</tspan><tspan x="76.0" textLength="5.21" lengthAdjust="spacingAndGlyphs">/</tspan><tspan x="81.21" textLength="58.49" lengthAdjust="spacingAndGlyphs">ドーマー</tspan></text>
<text y="594.32" font-size="14.5" fill="#5d84d6" font-weight="350"><tspan x="5" textLength="29.0" lengthAdjust="spacingAndGlyphs">診断</tspan></text>
<text y="618.72" font-size="18.4" fill="#f1f2f4" font-weight="350"><tspan x="38.5" textLength="111.0" lengthAdjust="spacingAndGlyphs">簡易構造診断</tspan></text>
<text y="641.72" font-size="18.4" fill="#f1f2f4" font-weight="350"><tspan x="38.5" textLength="33.77" lengthAdjust="spacingAndGlyphs">日影</tspan><tspan x="72.27" textLength="8.44" lengthAdjust="spacingAndGlyphs">・</tspan><tspan x="80.71" textLength="26.34" lengthAdjust="spacingAndGlyphs">その</tspan><tspan x="107.05" textLength="50.65" lengthAdjust="spacingAndGlyphs">他診断</tspan></text>
<text x="72.4" y="679.16" font-size="17.4" fill="#f6f7fb" textLength="58.6" lengthAdjust="spacingAndGlyphs" font-weight="bold" stroke="#121b3c" stroke-opacity=".75" stroke-width="2.6" paint-order="stroke" stroke-linejoin="round">立体化</text>
<text x="188" y="143.71" font-size="14.2" fill="#fff" textLength="58.2" lengthAdjust="spacingAndGlyphs" font-weight="350" >西立面図</text>
<path d="M422.6 135.6 H429.6 L426.1 140 Z" fill="#5b88d8"/>
<g transform="translate(448.6,136.3)"><rect x="-0.86" y="-5.15" width="1.72" height="2.34" fill="#f2f2f2" transform="rotate(0)"/><rect x="-0.86" y="-5.15" width="1.72" height="2.34" fill="#f2f2f2" transform="rotate(45)"/><rect x="-0.86" y="-5.15" width="1.72" height="2.34" fill="#f2f2f2" transform="rotate(90)"/><rect x="-0.86" y="-5.15" width="1.72" height="2.34" fill="#f2f2f2" transform="rotate(135)"/><rect x="-0.86" y="-5.15" width="1.72" height="2.34" fill="#f2f2f2" transform="rotate(180)"/><rect x="-0.86" y="-5.15" width="1.72" height="2.34" fill="#f2f2f2" transform="rotate(225)"/><rect x="-0.86" y="-5.15" width="1.72" height="2.34" fill="#f2f2f2" transform="rotate(270)"/><rect x="-0.86" y="-5.15" width="1.72" height="2.34" fill="#f2f2f2" transform="rotate(315)"/><circle r="3.70" fill="#f2f2f2"/><circle r="1.7" fill="#08090b"/></g>
<g transform="translate(456,143.2)"><rect x="-0.64" y="-3.83" width="1.28" height="1.74" fill="#6d9be6" transform="rotate(0)"/><rect x="-0.64" y="-3.83" width="1.28" height="1.74" fill="#6d9be6" transform="rotate(45)"/><rect x="-0.64" y="-3.83" width="1.28" height="1.74" fill="#6d9be6" transform="rotate(90)"/><rect x="-0.64" y="-3.83" width="1.28" height="1.74" fill="#6d9be6" transform="rotate(135)"/><rect x="-0.64" y="-3.83" width="1.28" height="1.74" fill="#6d9be6" transform="rotate(180)"/><rect x="-0.64" y="-3.83" width="1.28" height="1.74" fill="#6d9be6" transform="rotate(225)"/><rect x="-0.64" y="-3.83" width="1.28" height="1.74" fill="#6d9be6" transform="rotate(270)"/><rect x="-0.64" y="-3.83" width="1.28" height="1.74" fill="#6d9be6" transform="rotate(315)"/><circle r="2.75" fill="#6d9be6"/><circle r="1.3" fill="#08090b"/></g>
<text x="184.6" y="187.0" font-size="15" fill="#d6d8da" textLength="60" lengthAdjust="spacingAndGlyphs" font-weight="350" >CAD作図</text>
<text y="222.1" font-size="15" fill="#ebecee" font-weight="350"><tspan x="217.4" textLength="29.77" lengthAdjust="spacingAndGlyphs">作図</tspan><tspan x="247.17" textLength="34.83" lengthAdjust="spacingAndGlyphs">ツール</tspan></text>
<text y="252.1" font-size="15" fill="#ebecee" font-weight="350"><tspan x="217.4" textLength="44.0" lengthAdjust="spacingAndGlyphs">図面枠</tspan></text>
<text y="252.1" font-size="15" fill="#ebecee" font-weight="350"><tspan x="360" textLength="29.4" lengthAdjust="spacingAndGlyphs">記号</tspan></text>
<text y="282.1" font-size="15" fill="#ebecee" font-weight="350"><tspan x="217.4" textLength="44.0" lengthAdjust="spacingAndGlyphs">部分図</tspan></text>
<text y="282.1" font-size="15" fill="#ebecee" font-weight="350"><tspan x="360" textLength="30.5" lengthAdjust="spacingAndGlyphs">CAD</tspan><tspan x="390.5" textLength="28.9" lengthAdjust="spacingAndGlyphs">部品</tspan></text>
<text y="312.1" font-size="15" fill="#ebecee" font-weight="350"><tspan x="217.4" textLength="36.65" lengthAdjust="spacingAndGlyphs">パース</tspan><tspan x="254.05" textLength="4.35" lengthAdjust="spacingAndGlyphs">/</tspan><tspan x="258.4" textLength="46.99" lengthAdjust="spacingAndGlyphs">立面図</tspan></text>
<text y="312.1" font-size="15" fill="#ebecee" font-weight="350"><tspan x="360" textLength="29.04" lengthAdjust="spacingAndGlyphs">間取</tspan><tspan x="389.04" textLength="11.32" lengthAdjust="spacingAndGlyphs">り</tspan><tspan x="400.36" textLength="29.04" lengthAdjust="spacingAndGlyphs">画像</tspan></text>
<text y="342.1" font-size="15" fill="#ebecee" font-weight="350"><tspan x="217.4" textLength="59.0" lengthAdjust="spacingAndGlyphs">商品写真</tspan></text>
<text y="342.1" font-size="15" fill="#ebecee" font-weight="350"><tspan x="360" textLength="29.4" lengthAdjust="spacingAndGlyphs">画像</tspan></text>
<text y="375.7" font-size="15" fill="#9dbcfb" font-weight="350"><tspan x="277.6" textLength="106.79" lengthAdjust="spacingAndGlyphs">確認申請用図面</tspan><tspan x="384.39" textLength="11.9" lengthAdjust="spacingAndGlyphs">を</tspan><tspan x="396.29" textLength="30.51" lengthAdjust="spacingAndGlyphs">生成</tspan></text>
<text y="408.63" font-size="14.8" fill="#eab92f" font-weight="350"><tspan x="183.8" textLength="58.84" lengthAdjust="spacingAndGlyphs">インポート</tspan><tspan x="242.64" textLength="4.19" lengthAdjust="spacingAndGlyphs">/</tspan><tspan x="246.83" textLength="30.17" lengthAdjust="spacingAndGlyphs">作図</tspan></text>
<text y="436.7" font-size="15" fill="#ebecee" font-weight="350"><tspan x="220.5" textLength="30.24" lengthAdjust="spacingAndGlyphs">CAD</tspan><tspan x="250.74" textLength="33.51" lengthAdjust="spacingAndGlyphs">データ</tspan><tspan x="284.25" textLength="28.64" lengthAdjust="spacingAndGlyphs">入力</tspan></text>
<text y="441.7" font-size="15" fill="#ebecee" font-weight="350"><tspan x="336" textLength="27.22" lengthAdjust="spacingAndGlyphs">補正</tspan><tspan x="363.22" textLength="3.78" lengthAdjust="spacingAndGlyphs">:</tspan></text>
<text x="379.4" y="441.9" font-size="15" fill="#ebecee" textLength="30" lengthAdjust="spacingAndGlyphs" font-weight="350" >位置</text>
<text x="427.6" y="441.9" font-size="15" fill="#ebecee" textLength="30" lengthAdjust="spacingAndGlyphs" font-weight="350" >寸法</text>
<text y="481.8" font-size="15" fill="#ebecee" font-weight="350"><tspan x="212.6" textLength="30.0" lengthAdjust="spacingAndGlyphs">直線</tspan></text>
<text y="481.8" font-size="15" fill="#ebecee" font-weight="350"><tspan x="355.6" textLength="15.83" lengthAdjust="spacingAndGlyphs">折</tspan><tspan x="371.43" textLength="12.35" lengthAdjust="spacingAndGlyphs">れ</tspan><tspan x="383.78" textLength="15.83" lengthAdjust="spacingAndGlyphs">線</tspan></text>
<text y="519.0" font-size="15" fill="#ebecee" font-weight="350"><tspan x="213" textLength="15.0" lengthAdjust="spacingAndGlyphs">円</tspan></text>
<text y="519.0" font-size="15" fill="#ebecee" font-weight="350"><tspan x="355.6" textLength="44.6" lengthAdjust="spacingAndGlyphs">多角形</tspan></text>
<text y="556.4" font-size="15" fill="#ebecee" font-weight="350"><tspan x="212.6" textLength="59.4" lengthAdjust="spacingAndGlyphs">正多角形</tspan></text>
<text y="556.4" font-size="15" fill="#ebecee" font-weight="350"><tspan x="355.6" textLength="74.0" lengthAdjust="spacingAndGlyphs">手動寸法線</tspan></text>
<text y="593.6" font-size="15" fill="#ebecee" font-weight="350"><tspan x="212.6" textLength="29.4" lengthAdjust="spacingAndGlyphs">作表</tspan></text>
<text y="593.6" font-size="15" fill="#ebecee" font-weight="350"><tspan x="355.6" textLength="29.4" lengthAdjust="spacingAndGlyphs">文字</tspan></text>
<text y="649.6" font-size="15" fill="#ebecee" font-weight="350"><tspan x="212.6" textLength="44.0" lengthAdjust="spacingAndGlyphs">平行線</tspan></text>
<text y="649.6" font-size="15" fill="#ebecee" font-weight="350"><tspan x="355.6" textLength="44.6" lengthAdjust="spacingAndGlyphs">線伸縮</tspan></text>
<text y="686.8" font-size="15" fill="#ebecee" font-weight="350"><tspan x="212.6" textLength="29.4" lengthAdjust="spacingAndGlyphs">連結</tspan></text>
<text y="686.8" font-size="15" fill="#ebecee" font-weight="350"><tspan x="355.6" textLength="59.4" lengthAdjust="spacingAndGlyphs">部分削除</tspan></text>
<text y="724.2" font-size="15" fill="#ebecee" font-weight="350"><tspan x="212.6" textLength="27.77" lengthAdjust="spacingAndGlyphs">面取</tspan><tspan x="240.37" textLength="10.83" lengthAdjust="spacingAndGlyphs">り</tspan></text>
<text y="724.2" font-size="15" fill="#ebecee" font-weight="350"><tspan x="355.6" textLength="29.4" lengthAdjust="spacingAndGlyphs">包絡</tspan></text>
<text y="761.4" font-size="15" fill="#ebecee" font-weight="350"><tspan x="212.6" textLength="81.0" lengthAdjust="spacingAndGlyphs">線分間等分割</tspan></text>
<text y="761.4" font-size="15" fill="#ebecee" font-weight="350"><tspan x="355.6" textLength="7.91" lengthAdjust="spacingAndGlyphs">2</tspan><tspan x="363.51" textLength="71.09" lengthAdjust="spacingAndGlyphs">点間等分割</tspan></text>
<text y="798.8" font-size="15" fill="#ebecee" font-weight="350"><tspan x="212.6" textLength="74.0" lengthAdjust="spacingAndGlyphs">角度指定線</tspan></text>
<text y="798.8" font-size="15" fill="#ebecee" font-weight="350"><tspan x="355.6" textLength="44.6" lengthAdjust="spacingAndGlyphs">中心線</tspan></text>
<text y="621.93" font-size="14.8" fill="#eab92f" font-weight="500"><tspan x="183.8" textLength="58.4" lengthAdjust="spacingAndGlyphs">線分編集</tspan></text>
<text y="845.7" font-size="15" fill="#9dbcfb" font-weight="350"><tspan x="263.4" textLength="58.58" lengthAdjust="spacingAndGlyphs">レイヤから</tspan><tspan x="321.98" textLength="30.04" lengthAdjust="spacingAndGlyphs">部屋</tspan><tspan x="352.02" textLength="4.17" lengthAdjust="spacingAndGlyphs">/</tspan><tspan x="356.19" textLength="15.02" lengthAdjust="spacingAndGlyphs">壁</tspan><tspan x="371.21" textLength="11.72" lengthAdjust="spacingAndGlyphs">を</tspan><tspan x="382.93" textLength="60.08" lengthAdjust="spacingAndGlyphs">一括生成</tspan></text>
<path d="M1589 157.4 L1593.6 152.4 L1598.2 157.4" fill="none" stroke="#505050" stroke-width="2"/>
<path d="M1589 895.6 L1593.6 900.8 L1598.2 895.6" fill="none" stroke="#505050" stroke-width="2"/>
<path d="M513 915 L508 919.5 L513 924" fill="none" stroke="#505050" stroke-width="2"/>
<path d="M1570 915 L1575 919.5 L1570 924" fill="none" stroke="#505050" stroke-width="2"/>
<g><rect x="1619.5" y="116.5" width="19" height="19" fill="#1f2428" stroke="#e8e8e8" stroke-width="1"/><rect x="1620" y="117" width="4" height="18" fill="#f0b820"/><path d="M1636 119 L1636 133 L1628 126 Z" fill="#dfe3f2"/></g>
<clipPath id="cv"><rect x="501" y="144" width="1082" height="765"/></clipPath>
<g clip-path="url(#cv)" shape-rendering="crispEdges">
<line x1="519.5" y1="105.2" x2="519.5" y2="909" stroke="#cbcbcb" stroke-dasharray="49.9 50.2"/>
<line x1="542.5" y1="105.2" x2="542.5" y2="909" stroke="#cbcbcb" stroke-dasharray="49.9 50.2"/>
<line x1="565.5" y1="105.2" x2="565.5" y2="909" stroke="#cbcbcb" stroke-dasharray="49.9 50.2"/>
<line x1="588.5" y1="144" x2="588.5" y2="909" stroke="#cbcbcb"/>
<line x1="611.5" y1="105.2" x2="611.5" y2="909" stroke="#cbcbcb" stroke-dasharray="49.9 50.2"/>
<line x1="634.5" y1="105.2" x2="634.5" y2="909" stroke="#cbcbcb" stroke-dasharray="49.9 50.2"/>
<line x1="657.5" y1="105.2" x2="657.5" y2="909" stroke="#cbcbcb" stroke-dasharray="49.9 50.2"/>
<line x1="680.5" y1="105.2" x2="680.5" y2="909" stroke="#cbcbcb" stroke-dasharray="49.9 50.2"/>
<line x1="703.5" y1="144" x2="703.5" y2="909" stroke="#cbcbcb"/>
<line x1="726.5" y1="105.2" x2="726.5" y2="909" stroke="#cbcbcb" stroke-dasharray="49.9 50.2"/>
<line x1="749.5" y1="105.2" x2="749.5" y2="909" stroke="#cbcbcb" stroke-dasharray="49.9 50.2"/>
<line x1="772.5" y1="105.2" x2="772.5" y2="909" stroke="#cbcbcb" stroke-dasharray="49.9 50.2"/>
<line x1="795.5" y1="105.2" x2="795.5" y2="909" stroke="#cbcbcb" stroke-dasharray="49.9 50.2"/>
<line x1="818.5" y1="144" x2="818.5" y2="909" stroke="#cbcbcb"/>
<line x1="841.5" y1="105.2" x2="841.5" y2="909" stroke="#cbcbcb" stroke-dasharray="49.9 50.2"/>
<line x1="864.5" y1="105.2" x2="864.5" y2="909" stroke="#cbcbcb" stroke-dasharray="49.9 50.2"/>
<line x1="887.5" y1="105.2" x2="887.5" y2="909" stroke="#cbcbcb" stroke-dasharray="49.9 50.2"/>
<line x1="910.5" y1="105.2" x2="910.5" y2="909" stroke="#cbcbcb" stroke-dasharray="49.9 50.2"/>
<line x1="933.5" y1="144" x2="933.5" y2="909" stroke="#cbcbcb"/>
<line x1="956.5" y1="105.2" x2="956.5" y2="909" stroke="#cbcbcb" stroke-dasharray="49.9 50.2"/>
<line x1="979.5" y1="105.2" x2="979.5" y2="909" stroke="#cbcbcb" stroke-dasharray="49.9 50.2"/>
<line x1="1002.5" y1="105.2" x2="1002.5" y2="909" stroke="#cbcbcb" stroke-dasharray="49.9 50.2"/>
<line x1="1025.5" y1="105.2" x2="1025.5" y2="909" stroke="#cbcbcb" stroke-dasharray="49.9 50.2"/>
<line x1="1048.5" y1="144" x2="1048.5" y2="909" stroke="#cbcbcb"/>
<line x1="1071.5" y1="105.2" x2="1071.5" y2="909" stroke="#cbcbcb" stroke-dasharray="49.9 50.2"/>
<line x1="1094.5" y1="105.2" x2="1094.5" y2="909" stroke="#cbcbcb" stroke-dasharray="49.9 50.2"/>
<line x1="1117.5" y1="105.2" x2="1117.5" y2="909" stroke="#cbcbcb" stroke-dasharray="49.9 50.2"/>
<line x1="1140.5" y1="105.2" x2="1140.5" y2="909" stroke="#cbcbcb" stroke-dasharray="49.9 50.2"/>
<line x1="1163.5" y1="144" x2="1163.5" y2="909" stroke="#cbcbcb"/>
<line x1="1185.5" y1="105.2" x2="1185.5" y2="909" stroke="#cbcbcb" stroke-dasharray="49.9 50.2"/>
<line x1="1208.5" y1="105.2" x2="1208.5" y2="909" stroke="#cbcbcb" stroke-dasharray="49.9 50.2"/>
<line x1="1231.5" y1="105.2" x2="1231.5" y2="909" stroke="#cbcbcb" stroke-dasharray="49.9 50.2"/>
<line x1="1254.5" y1="105.2" x2="1254.5" y2="909" stroke="#cbcbcb" stroke-dasharray="49.9 50.2"/>
<line x1="1277.5" y1="144" x2="1277.5" y2="909" stroke="#cbcbcb"/>
<line x1="1300.5" y1="105.2" x2="1300.5" y2="909" stroke="#cbcbcb" stroke-dasharray="49.9 50.2"/>
<line x1="1323.5" y1="105.2" x2="1323.5" y2="909" stroke="#cbcbcb" stroke-dasharray="49.9 50.2"/>
<line x1="1346.5" y1="105.2" x2="1346.5" y2="909" stroke="#cbcbcb" stroke-dasharray="49.9 50.2"/>
<line x1="1369.5" y1="105.2" x2="1369.5" y2="909" stroke="#cbcbcb" stroke-dasharray="49.9 50.2"/>
<line x1="1392.5" y1="144" x2="1392.5" y2="909" stroke="#cbcbcb"/>
<line x1="1415.5" y1="105.2" x2="1415.5" y2="909" stroke="#cbcbcb" stroke-dasharray="49.9 50.2"/>
<line x1="1438.5" y1="105.2" x2="1438.5" y2="909" stroke="#cbcbcb" stroke-dasharray="49.9 50.2"/>
<line x1="1461.5" y1="105.2" x2="1461.5" y2="909" stroke="#cbcbcb" stroke-dasharray="49.9 50.2"/>
<line x1="1484.5" y1="105.2" x2="1484.5" y2="909" stroke="#cbcbcb" stroke-dasharray="49.9 50.2"/>
<line x1="1507.5" y1="144" x2="1507.5" y2="909" stroke="#cbcbcb"/>
<line x1="1530.5" y1="105.2" x2="1530.5" y2="909" stroke="#cbcbcb" stroke-dasharray="49.9 50.2"/>
<line x1="1553.5" y1="105.2" x2="1553.5" y2="909" stroke="#cbcbcb" stroke-dasharray="49.9 50.2"/>
<line x1="1576.5" y1="105.2" x2="1576.5" y2="909" stroke="#cbcbcb" stroke-dasharray="49.9 50.2"/>
<line x1="474.6" y1="150.5" x2="1583" y2="150.5" stroke="#cbcbcb" stroke-dasharray="49.3 50.54"/>
<line x1="474.6" y1="173.5" x2="1583" y2="173.5" stroke="#cbcbcb" stroke-dasharray="49.3 50.54"/>
<line x1="474.6" y1="196.5" x2="1583" y2="196.5" stroke="#cbcbcb" stroke-dasharray="49.3 50.54"/>
<line x1="474.6" y1="219.5" x2="1583" y2="219.5" stroke="#cbcbcb" stroke-dasharray="49.3 50.54"/>
<line x1="501" y1="242.5" x2="1583" y2="242.5" stroke="#cbcbcb"/>
<line x1="474.6" y1="265.5" x2="1583" y2="265.5" stroke="#cbcbcb" stroke-dasharray="49.3 50.54"/>
<line x1="474.6" y1="288.5" x2="1583" y2="288.5" stroke="#cbcbcb" stroke-dasharray="49.3 50.54"/>
<line x1="474.6" y1="311.5" x2="1583" y2="311.5" stroke="#cbcbcb" stroke-dasharray="49.3 50.54"/>
<line x1="474.6" y1="334.5" x2="1583" y2="334.5" stroke="#cbcbcb" stroke-dasharray="49.3 50.54"/>
<line x1="501" y1="357.5" x2="1583" y2="357.5" stroke="#cbcbcb"/>
<line x1="474.6" y1="380.5" x2="1583" y2="380.5" stroke="#cbcbcb" stroke-dasharray="49.3 50.54"/>
<line x1="474.6" y1="403.5" x2="1583" y2="403.5" stroke="#cbcbcb" stroke-dasharray="49.3 50.54"/>
<line x1="474.6" y1="426.5" x2="1583" y2="426.5" stroke="#cbcbcb" stroke-dasharray="49.3 50.54"/>
<line x1="474.6" y1="449.5" x2="1583" y2="449.5" stroke="#cbcbcb" stroke-dasharray="49.3 50.54"/>
<line x1="501" y1="472.5" x2="1583" y2="472.5" stroke="#cbcbcb"/>
<line x1="474.6" y1="495.5" x2="1583" y2="495.5" stroke="#cbcbcb" stroke-dasharray="49.3 50.54"/>
<line x1="474.6" y1="518.5" x2="1583" y2="518.5" stroke="#cbcbcb" stroke-dasharray="49.3 50.54"/>
<line x1="474.6" y1="541.5" x2="1583" y2="541.5" stroke="#cbcbcb" stroke-dasharray="49.3 50.54"/>
<line x1="474.6" y1="564.5" x2="1583" y2="564.5" stroke="#cbcbcb" stroke-dasharray="49.3 50.54"/>
<line x1="501" y1="587.5" x2="1583" y2="587.5" stroke="#cbcbcb"/>
<line x1="474.6" y1="610.5" x2="1583" y2="610.5" stroke="#cbcbcb" stroke-dasharray="49.3 50.54"/>
<line x1="474.6" y1="633.5" x2="1583" y2="633.5" stroke="#cbcbcb" stroke-dasharray="49.3 50.54"/>
<line x1="474.6" y1="656.5" x2="1583" y2="656.5" stroke="#cbcbcb" stroke-dasharray="49.3 50.54"/>
<line x1="474.6" y1="679.5" x2="1583" y2="679.5" stroke="#cbcbcb" stroke-dasharray="49.3 50.54"/>
<line x1="501" y1="702.5" x2="1583" y2="702.5" stroke="#cbcbcb"/>
<line x1="474.6" y1="725.5" x2="1583" y2="725.5" stroke="#cbcbcb" stroke-dasharray="49.3 50.54"/>
<line x1="474.6" y1="748.5" x2="1583" y2="748.5" stroke="#cbcbcb" stroke-dasharray="49.3 50.54"/>
<line x1="474.6" y1="771.5" x2="1583" y2="771.5" stroke="#cbcbcb" stroke-dasharray="49.3 50.54"/>
<line x1="474.6" y1="794.5" x2="1583" y2="794.5" stroke="#cbcbcb" stroke-dasharray="49.3 50.54"/>
<line x1="501" y1="817.5" x2="1583" y2="817.5" stroke="#cbcbcb"/>
<line x1="474.6" y1="840.5" x2="1583" y2="840.5" stroke="#cbcbcb" stroke-dasharray="49.3 50.54"/>
<line x1="474.6" y1="863.5" x2="1583" y2="863.5" stroke="#cbcbcb" stroke-dasharray="49.3 50.54"/>
<line x1="474.6" y1="886.5" x2="1583" y2="886.5" stroke="#cbcbcb" stroke-dasharray="49.3 50.54"/>
<line x1="474.6" y1="909.5" x2="1583" y2="909.5" stroke="#cbcbcb" stroke-dasharray="49.3 50.54"/>
</g>
<g shape-rendering="crispEdges" stroke="#f0f0f0">
<line x1="519.5" y1="133" x2="519.5" y2="142"/>
<line x1="542.5" y1="133" x2="542.5" y2="142"/>
<line x1="565.5" y1="133" x2="565.5" y2="142"/>
<line x1="588.5" y1="133" x2="588.5" y2="142"/>
<line x1="611.5" y1="133" x2="611.5" y2="142"/>
<line x1="634.5" y1="133" x2="634.5" y2="142"/>
<line x1="657.5" y1="133" x2="657.5" y2="142"/>
<line x1="703.5" y1="133" x2="703.5" y2="142"/>
<line x1="726.5" y1="133" x2="726.5" y2="142"/>
<line x1="749.5" y1="133" x2="749.5" y2="142"/>
<line x1="772.5" y1="133" x2="772.5" y2="142"/>
<line x1="795.5" y1="133" x2="795.5" y2="142"/>
<line x1="818.5" y1="133" x2="818.5" y2="142"/>
<line x1="841.5" y1="133" x2="841.5" y2="142"/>
<line x1="864.5" y1="133" x2="864.5" y2="142"/>
<line x1="887.5" y1="133" x2="887.5" y2="142"/>
<line x1="910.5" y1="133" x2="910.5" y2="142"/>
<line x1="933.5" y1="133" x2="933.5" y2="142"/>
<line x1="956.5" y1="133" x2="956.5" y2="142"/>
<line x1="979.5" y1="133" x2="979.5" y2="142"/>
<line x1="1002.5" y1="133" x2="1002.5" y2="142"/>
<line x1="1025.5" y1="133" x2="1025.5" y2="142"/>
<line x1="1048.5" y1="133" x2="1048.5" y2="142"/>
<line x1="1071.5" y1="133" x2="1071.5" y2="142"/>
<line x1="1094.5" y1="133" x2="1094.5" y2="142"/>
<line x1="1117.5" y1="133" x2="1117.5" y2="142"/>
<line x1="1140.5" y1="133" x2="1140.5" y2="142"/>
<line x1="1163.5" y1="133" x2="1163.5" y2="142"/>
<line x1="1185.5" y1="133" x2="1185.5" y2="142"/>
<line x1="1208.5" y1="133" x2="1208.5" y2="142"/>
<line x1="1231.5" y1="133" x2="1231.5" y2="142"/>
<line x1="1254.5" y1="133" x2="1254.5" y2="142"/>
<line x1="1277.5" y1="133" x2="1277.5" y2="142"/>
<line x1="1300.5" y1="133" x2="1300.5" y2="142"/>
<line x1="1323.5" y1="133" x2="1323.5" y2="142"/>
<line x1="1346.5" y1="133" x2="1346.5" y2="142"/>
<line x1="1369.5" y1="133" x2="1369.5" y2="142"/>
<line x1="1392.5" y1="133" x2="1392.5" y2="142"/>
<line x1="1415.5" y1="133" x2="1415.5" y2="142"/>
<line x1="1438.5" y1="133" x2="1438.5" y2="142"/>
<line x1="1461.5" y1="133" x2="1461.5" y2="142"/>
<line x1="1484.5" y1="133" x2="1484.5" y2="142"/>
<line x1="1507.5" y1="133" x2="1507.5" y2="142"/>
<line x1="1530.5" y1="133" x2="1530.5" y2="142"/>
<line x1="1553.5" y1="133" x2="1553.5" y2="142"/>
<line x1="490" y1="173.5" x2="499" y2="173.5"/>
<line x1="490" y1="196.5" x2="499" y2="196.5"/>
<line x1="490" y1="219.5" x2="499" y2="219.5"/>
<line x1="490" y1="265.5" x2="499" y2="265.5"/>
<line x1="490" y1="288.5" x2="499" y2="288.5"/>
<line x1="490" y1="311.5" x2="499" y2="311.5"/>
<line x1="490" y1="334.5" x2="499" y2="334.5"/>
<line x1="490" y1="357.5" x2="499" y2="357.5"/>
<line x1="490" y1="380.5" x2="499" y2="380.5"/>
<line x1="490" y1="403.5" x2="499" y2="403.5"/>
<line x1="490" y1="426.5" x2="499" y2="426.5"/>
<line x1="490" y1="449.5" x2="499" y2="449.5"/>
<line x1="490" y1="472.5" x2="499" y2="472.5"/>
<line x1="490" y1="495.5" x2="499" y2="495.5"/>
<line x1="490" y1="518.5" x2="499" y2="518.5"/>
<line x1="490" y1="564.5" x2="499" y2="564.5"/>
<line x1="490" y1="587.5" x2="499" y2="587.5"/>
<line x1="490" y1="610.5" x2="499" y2="610.5"/>
<line x1="490" y1="633.5" x2="499" y2="633.5"/>
<line x1="490" y1="656.5" x2="499" y2="656.5"/>
<line x1="490" y1="679.5" x2="499" y2="679.5"/>
<line x1="490" y1="702.5" x2="499" y2="702.5"/>
<line x1="490" y1="725.5" x2="499" y2="725.5"/>
<line x1="490" y1="748.5" x2="499" y2="748.5"/>
<line x1="490" y1="771.5" x2="499" y2="771.5"/>
<line x1="490" y1="794.5" x2="499" y2="794.5"/>
<line x1="490" y1="817.5" x2="499" y2="817.5"/>
<line x1="490" y1="840.5" x2="499" y2="840.5"/>
<line x1="490" y1="863.5" x2="499" y2="863.5"/>
<line x1="490" y1="886.5" x2="499" y2="886.5"/>
<line x1="490" y1="909.5" x2="499" y2="909.5"/>
</g>
<text x="890.5" y="132.5" font-size="12.5" fill="#f4f4f4" text-anchor="middle" textLength="40" lengthAdjust="spacingAndGlyphs" >16835</text>
<text transform="translate(491.5,392) rotate(-90)" font-size="12.5" fill="#f4f4f4" text-anchor="middle" textLength="40" lengthAdjust="spacingAndGlyphs">11830</text>
<path d="M675 124 H686 V132 L680.5 143.5 L675 132 Z" fill="#ececec"/><path d="M686.2 124 V132.2 L680.8 143.4" fill="none" stroke="#30343a" stroke-width="1"/>
<path d="M1100 124 H1111 V132 L1105.5 143.5 L1100 132 Z" fill="#ececec"/><path d="M1111.2 124 V132.2 L1105.8 143.4" fill="none" stroke="#30343a" stroke-width="1"/>
<path d="M481 236.5 H490 L500.8 242.5 L490 248 H481 Z" fill="#ececec"/><path d="M481 248.3 H490.2 L500.6 242.8" fill="none" stroke="#30343a" stroke-width="1"/>
<path d="M481 535.5 H490 L500.8 541.5 L490 547 H481 Z" fill="#ececec"/><path d="M481 547.3 H490.2 L500.6 541.8" fill="none" stroke="#30343a" stroke-width="1"/>
<g shape-rendering="crispEdges" stroke="#008000"><line x1="795" y1="702.5" x2="842" y2="702.5"/><line x1="818.5" y1="679" x2="818.5" y2="726"/></g>
<g shape-rendering="crispEdges" stroke="#000" fill="none">
<rect x="539.5" y="179.5" width="1006" height="695"/>
<line x1="539" y1="808.5" x2="1546" y2="808.5"/>
<line x1="738.5" y1="808" x2="738.5" y2="875"/>
<line x1="936.5" y1="808" x2="936.5" y2="875"/>
<line x1="1126.5" y1="808" x2="1126.5" y2="875"/>
<line x1="936" y1="830.5" x2="1126" y2="830.5"/>
<line x1="936" y1="852.5" x2="1546" y2="852.5"/>
<line x1="1255.5" y1="852" x2="1255.5" y2="875"/>
<line x1="1399.5" y1="852" x2="1399.5" y2="875"/>
</g>
<g shape-rendering="crispEdges" stroke="#e0900c">
<line x1="680.5" y1="144" x2="680.5" y2="909"/>
<line x1="1105.5" y1="144" x2="1105.5" y2="909"/>
<line x1="501" y1="242.5" x2="1583" y2="242.5"/>
<line x1="501" y1="541.5" x2="1583" y2="541.5"/>
</g>
<text x="938" y="817.17" font-size="8.4" fill="#000" textLength="16.5" lengthAdjust="spacingAndGlyphs" class="mono" >Date</text>
<text x="938" y="838.77" font-size="8.4" fill="#000" textLength="45.3" lengthAdjust="spacingAndGlyphs" class="mono" >Designed by</text>
<text x="938" y="860.07" font-size="8.4" fill="#000" textLength="41.2" lengthAdjust="spacingAndGlyphs" class="mono" >Checked by</text>
<text x="1128" y="817.37" font-size="8.4" fill="#000" textLength="49.4" lengthAdjust="spacingAndGlyphs" class="mono" >Project Name</text>
<text x="1128" y="860.07" font-size="8.4" fill="#000" textLength="28.8" lengthAdjust="spacingAndGlyphs" class="mono" >Subject</text>
<text x="1257" y="860.07" font-size="8.4" fill="#000" textLength="20.6" lengthAdjust="spacingAndGlyphs" class="mono" >Scale</text>
<text x="1401" y="860.07" font-size="8.4" fill="#000" textLength="45.3" lengthAdjust="spacingAndGlyphs" class="mono" >Drawing No.</text>
<g stroke="#000" fill="none" stroke-width="1">
<g shape-rendering="crispEdges">
<line x1="1105.5" y1="242" x2="1105.5" y2="431"/>
<line x1="1118.5" y1="242" x2="1118.5" y2="431"/>
<line x1="1105" y1="242.5" x2="1163" y2="242.5"/>
<line x1="1105" y1="430.5" x2="1163" y2="430.5"/>
<line x1="1118" y1="275.5" x2="1163" y2="275.5"/>
<line x1="1118" y1="281.5" x2="1163" y2="281.5"/>
<line x1="1118" y1="341.5" x2="1163" y2="341.5"/>
<line x1="1118" y1="354.5" x2="1163" y2="354.5"/>
<line x1="1118" y1="415.5" x2="1163" y2="415.5"/>
<line x1="1118" y1="420.5" x2="1163" y2="420.5"/>
</g>
<path d="M1168.8 276.3 L1267 237.6" stroke-width="2.2"/>
<path d="M1266.5 237.4 L1290.5 246.8" stroke-width="1.1"/>
<path d="M1291.5 246 L1315 246" stroke-width="1.9"/>
<path d="M1314.5 246.3 L1389 276.8" stroke-width="1.1"/>
<g shape-rendering="crispEdges">
<rect x="1168.5" y="277.5" width="222" height="5"/>
<line x1="1168" y1="277" x2="1391" y2="277" stroke-width="2"/>
<line x1="1186.5" y1="282" x2="1186.5" y2="431"/>
<line x1="1372.5" y1="282" x2="1372.5" y2="431"/>
<line x1="1186" y1="430.5" x2="1373" y2="430.5"/>
<line x1="1186" y1="420.5" x2="1373" y2="420.5"/>
<rect x="1185.5" y="343.5" width="187" height="5" fill="#fff"/>
<path d="M1373 311.5 H1384.5 V348.5 H1373 M1373 343.5 H1384.5"/>
<line x1="1185.5" y1="291" x2="1185.5" y2="316" stroke-width="2"/>
<line x1="1185.5" y1="364.5" x2="1185.5" y2="388.5" stroke-width="2"/>
<line x1="1373.5" y1="291" x2="1373.5" y2="316" stroke-width="2"/>
<line x1="1373.5" y1="358" x2="1373.5" y2="415.5" stroke-width="2"/>
</g>
<rect x="1241.45" y="306.25" width="30.299999999999955" height="22.30000000000001" stroke-width="2.5"/>
<line x1="1256.8" y1="305" x2="1256.8" y2="329.8" stroke-width="1.3"/>
<rect x="1306.45" y="292.25" width="18.09999999999991" height="22.5" stroke-width="2.5"/>
<line x1="1314.8" y1="291" x2="1314.8" y2="316" stroke-width="1.3"/>
<rect x="1211.5" y="365.4" width="18.200000000000045" height="22.30000000000001" stroke-width="2"/>
<line x1="1210.5" y1="366.2" x2="1230.7" y2="366.2" stroke-width="3"/>
<line x1="1210.5" y1="386.09999999999997" x2="1230.7" y2="386.09999999999997" stroke-width=".9"/>
<line x1="1220.4" y1="364.4" x2="1220.4" y2="388.7" stroke-width="1.2"/>
<rect x="1303.2" y="365.4" width="18.799999999999955" height="22.30000000000001" stroke-width="2"/>
<line x1="1302.2" y1="366.2" x2="1323" y2="366.2" stroke-width="3"/>
<line x1="1302.2" y1="386.09999999999997" x2="1323" y2="386.09999999999997" stroke-width=".9"/>
<line x1="1312.5" y1="364.4" x2="1312.5" y2="388.7" stroke-width="1.2"/>
</g>
<text x="1143.5" y="241.82" font-size="7" fill="#000" text-anchor="middle" textLength="28" lengthAdjust="spacingAndGlyphs" >最高高さ</text>
<text x="1143.5" y="274.32" font-size="7" fill="#000" text-anchor="middle" textLength="14" lengthAdjust="spacingAndGlyphs" >軒高</text>
<text x="1143.5" y="280.82" font-size="7" fill="#000" text-anchor="middle" textLength="20" lengthAdjust="spacingAndGlyphs" >2F CH</text>
<text x="1143.5" y="341.12" font-size="7" fill="#000" text-anchor="middle" textLength="18" lengthAdjust="spacingAndGlyphs" >2F FL</text>
<text x="1143.5" y="354.02" font-size="7" fill="#000" text-anchor="middle" textLength="20" lengthAdjust="spacingAndGlyphs" >1F CH</text>
<text x="1143.5" y="413.82" font-size="7" fill="#000" text-anchor="middle" textLength="18" lengthAdjust="spacingAndGlyphs" >1F FL</text>
<text x="1143.5" y="420.32" font-size="7" fill="#000" text-anchor="middle" textLength="20" lengthAdjust="spacingAndGlyphs" >基礎高</text>
<text transform="translate(1100.6,337) rotate(-90)" font-size="7.4" fill="#000" text-anchor="middle" textLength="19.5" lengthAdjust="spacingAndGlyphs">7,434</text>
<text transform="translate(1112.4,257.5) rotate(-90)" font-size="7.4" fill="#000" text-anchor="middle" textLength="19" lengthAdjust="spacingAndGlyphs">1,274</text>
<text transform="translate(1112.4,277.8) rotate(-90)" font-size="7.4" fill="#000" text-anchor="middle" textLength="10" lengthAdjust="spacingAndGlyphs">250</text>
<text transform="translate(1112.4,311) rotate(-90)" font-size="7.4" fill="#000" text-anchor="middle" textLength="19" lengthAdjust="spacingAndGlyphs">2,400</text>
<text transform="translate(1112.4,348) rotate(-90)" font-size="7.4" fill="#000" text-anchor="middle" textLength="11" lengthAdjust="spacingAndGlyphs">500</text>
<text transform="translate(1112.4,383.7) rotate(-90)" font-size="7.4" fill="#000" text-anchor="middle" textLength="19" lengthAdjust="spacingAndGlyphs">2,400</text>
<text transform="translate(1112.4,414.5) rotate(-90)" font-size="7.4" fill="#000" text-anchor="middle" textLength="9" lengthAdjust="spacingAndGlyphs">410</text>
<text transform="translate(1112.4,426) rotate(-90)" font-size="7.4" fill="#000" text-anchor="middle" textLength="8" lengthAdjust="spacingAndGlyphs">400</text>
<g stroke="#0000ff" fill="none" stroke-width="1">
<line x1="1187.5" y1="473" x2="1187.5" y2="496" shape-rendering="crispEdges"/>
<circle cx="1187.5" cy="503.6" r="7.6"/>
<line x1="1210.5" y1="473" x2="1210.5" y2="496" shape-rendering="crispEdges"/>
<circle cx="1210.5" cy="503.6" r="7.6"/>
<line x1="1233.5" y1="473" x2="1233.5" y2="496" shape-rendering="crispEdges"/>
<circle cx="1233.5" cy="503.6" r="7.6"/>
<line x1="1256.5" y1="473" x2="1256.5" y2="496" shape-rendering="crispEdges"/>
<circle cx="1256.5" cy="503.6" r="7.6"/>
<line x1="1279.5" y1="473" x2="1279.5" y2="496" shape-rendering="crispEdges"/>
<circle cx="1279.5" cy="503.6" r="7.6"/>
<line x1="1302.5" y1="473" x2="1302.5" y2="496" shape-rendering="crispEdges"/>
<circle cx="1302.5" cy="503.6" r="7.6"/>
<line x1="1325.5" y1="473" x2="1325.5" y2="496" shape-rendering="crispEdges"/>
<circle cx="1325.5" cy="503.6" r="7.6"/>
<line x1="1348.5" y1="473" x2="1348.5" y2="496" shape-rendering="crispEdges"/>
<circle cx="1348.5" cy="503.6" r="7.6"/>
<line x1="1371.5" y1="473" x2="1371.5" y2="496" shape-rendering="crispEdges"/>
<circle cx="1371.5" cy="503.6" r="7.6"/>
</g>
<text x="1186.6" y="504.4" font-size="7.5" fill="#000" text-anchor="middle" textLength="9.8" lengthAdjust="spacingAndGlyphs" >Y8</text>
<text x="1209.6" y="504.4" font-size="7.5" fill="#000" text-anchor="middle" textLength="9.8" lengthAdjust="spacingAndGlyphs" >Y7</text>
<text x="1232.6" y="504.4" font-size="7.5" fill="#000" text-anchor="middle" textLength="9.8" lengthAdjust="spacingAndGlyphs" >Y6</text>
<text x="1255.6" y="504.4" font-size="7.5" fill="#000" text-anchor="middle" textLength="9.8" lengthAdjust="spacingAndGlyphs" >Y5</text>
<text x="1278.6" y="504.4" font-size="7.5" fill="#000" text-anchor="middle" textLength="9.8" lengthAdjust="spacingAndGlyphs" >Y4</text>
<text x="1301.6" y="504.4" font-size="7.5" fill="#000" text-anchor="middle" textLength="9.8" lengthAdjust="spacingAndGlyphs" >Y3</text>
<text x="1324.6" y="504.4" font-size="7.5" fill="#000" text-anchor="middle" textLength="9.8" lengthAdjust="spacingAndGlyphs" >Y2</text>
<text x="1347.6" y="504.4" font-size="7.5" fill="#000" text-anchor="middle" textLength="9.8" lengthAdjust="spacingAndGlyphs" >Y1</text>
<text x="1370.6" y="504.4" font-size="7.5" fill="#000" text-anchor="middle" textLength="9.8" lengthAdjust="spacingAndGlyphs" >Y0</text>
<g transform="translate(9.6,166.80)"><rect x=".6" y=".6" width="16.8" height="14.8" rx="1.2" fill="#f4f5f8" stroke="#9aa6c8" stroke-width=".6"/><rect x="2.6" y="2.6" width="12.8" height="10.8" fill="#4761b8"/><path d="M5 5.2 H8.6 V8 H5.4 V11 H8.6 M10.4 4.6 V11.4 M10.4 8 H13 M12.8 4.6 V6.4 M12.8 9.6 V11.4" fill="none" stroke="#f4f5f8" stroke-width="1.5"/></g>
<g transform="translate(9.6,189.80)"><path d="M1 2 H17.2 V12 L13.2 16 H1 Z" fill="#a9adaf"/><path d="M1 12.4 H13 L17 8.6 V12 L13.2 16 H1 Z" fill="#7d8285"/><rect x="12.8" y="3.4" width="2" height="5.4" fill="#e9e9e9"/><rect x="3.6" y="12.6" width="6.4" height="1.5" fill="#e9e9e9"/><path d="M1 1.6 H12.4 V8.6 L9.6 11.4 H1 Z" fill="#3f9a1c"/><path d="M1 1.6 H12.4 V5 H1 Z" fill="#58b52c" opacity=".6"/></g>
<g transform="translate(9.6,235.80)"><path d="M4 1.4 L17.2 .8 V10.2 L13.4 15.2 L.8 15.6 V6.2 Z" fill="#efe3c6"/><path d="M4 1.4 L.8 6.2 V15.6 L4 10.8 Z" fill="#d9c8a4"/><path d="M4 10.8 L17.2 10.2 L13.4 15.2 L.8 15.6 Z" fill="#9a4a18"/><path d="M3 13 L15.4 12.4 M6 11 L4.2 15.2 M10.6 10.8 L9 15.2" stroke="#d98a3a" stroke-width=".8" fill="none"/><rect x="8.6" y="3.4" width="4.6" height="4" fill="#8d99ad"/></g>
<g transform="translate(9.6,258.80)"><path d="M4 1.4 L17.2 .8 V10.2 L13.4 15.2 L.8 15.6 V6.2 Z" fill="#efe3c6"/><path d="M4 1.4 L.8 6.2 V15.6 L4 10.8 Z" fill="#d9c8a4"/><path d="M4 10.8 L17.2 10.2 L13.4 15.2 L.8 15.6 Z" fill="#9a4a18"/><path d="M3 13 L15.4 12.4 M6 11 L4.2 15.2 M10.6 10.8 L9 15.2" stroke="#d98a3a" stroke-width=".8" fill="none"/><rect x="8.6" y="3.4" width="4.6" height="4" fill="#c9a86a"/><circle cx="10.8" cy="8" r="3.1" fill="#2a2d31" stroke="#f0f0f0" stroke-width="1.7"/><path d="M13.2 10.4 L18.4 15.2" stroke="#f0f0f0" stroke-width="2.4" stroke-linecap="round"/></g>
<g transform="translate(9.6,281.80)"><path d="M10.6 -1 H17.6 V16.4 H1 L1 14.6 L3.6 11.2 L6 7.6 L8.4 4 Z" fill="url(#gSt)"/><rect x="6.2" y="1.8000000000000003" width="10.0" height="1.9" rx=".8" fill="#eaa94e"/><rect x="7.800000000000001" y="3.7" width="8.4" height="1.6" fill="#6a3608"/><rect x="3.6" y="5.3" width="10.6" height="1.9" rx=".8" fill="#eaa94e"/><rect x="5.2" y="7.2" width="9.0" height="1.6" fill="#6a3608"/><rect x="1.2" y="9.0" width="10.600000000000001" height="1.9" rx=".8" fill="#eaa94e"/><rect x="2.8" y="10.9" width="9.000000000000002" height="1.6" fill="#6a3608"/><rect x="-1.3" y="12.5" width="10.5" height="1.9" rx=".8" fill="#eaa94e"/><rect x="0.30000000000000004" y="14.4" width="8.9" height="1.6" fill="#6a3608"/></g>
<g transform="translate(9.6,304.80)"><path d="M3.5 1.9 L12.6 1.9 L7.8 6.8 L-.3 6.8 Z" fill="#a6dcdc"/><path d="M4.6 7.6 L15 7 L9.9 11.6 L-.3 11.6 Z" fill="#eed596"/><path d="M5.1 12.6 L17.5 11.8 L12.8 16.4 L-.3 16.4 Z" fill="#d9a0bc"/></g>
<g transform="translate(9.6,350.80)"><rect x="-2.4" y="4.6" width="10.6" height="8.6" fill="#e8ecf0"/><rect x="-1.6" y="5.4" width="4.2" height="7" fill="#4f86c8"/><rect x="3.4" y="5.4" width="4.2" height="7" fill="#6fa2dc"/><rect x="9.6" y=".6" width="10" height="15.2" fill="#e3b27a"/><path d="M11 2 L16.8 3.2 V15.8 H11 Z" fill="#b06a28"/><rect x="17.4" y="2" width="1.2" height="13.8" fill="#7a4212"/><circle cx="15.6" cy="9.6" r=".8" fill="#f4e6c0"/></g>
<g transform="translate(9.6,373.80)"><path d="M-.4 2 H6.4 C6 6 4.2 8.6 3.6 10.8 C4 12.6 5.2 14.4 5.4 16.4 H-.4 Z" fill="#a6d296"/><path d="M-.4 9.4 L3.4 10.6 L2.2 13.4 L.8 11.6 L-.4 12 Z" fill="#1e7a22"/><path d="M17.6 2 H10.8 C11.2 6 13 8.6 13.6 10.8 C13.2 12.6 12 14.4 11.8 16.4 H17.6 Z" fill="#a6d296"/><path d="M17.6 9.4 L13.8 10.6 L15 13.4 L16.4 11.6 L17.6 12 Z" fill="#1e7a22"/><path d="M.2 2.6 H6 M11.2 2.6 H17 M.2 15.8 H5 M12.2 15.8 H17" stroke="#c9efba" stroke-width="1.1"/></g>
<g transform="translate(9.6,396.80)"><path d="M.6 6 L4.4 1.2 H17.6 V9.4 L13.2 16 H.6 Z" fill="#dfe6ee"/><path d="M.6 9.4 H13.2 L17.6 4.4 V9.4 L13.2 16 H.6 Z" fill="#7fb6e8"/><path d="M2.4 8.6 L5.4 5 H15.6 L12.6 8.6 Z" fill="#1e96d8"/><path d="M4.4 1.2 V5 M7 1.2 V5 M9.6 1.2 V5 M12.2 1.2 V5 M14.8 1.2 V5 M4.4 3 H17.6" stroke="#9aa4ae" stroke-width=".6" fill="none"/><path d="M.6 9.4 H13.2 L17.6 4.4" stroke="#f6f8fa" stroke-width=".9" fill="none"/></g>
<g transform="translate(9.6,419.80)"><path d="M0 13.4 L4 11 H15 L18.6 13.4 V15.8 H0 Z" fill="#9fc49a"/><path d="M5.6 .6 H12.8 V7 H5.6 Z" fill="#e0ae6c"/><path d="M7.6 2 H10.8 V6 H7.6 Z" fill="#1e2226"/><path d="M9.2 .6 V7" stroke="#e0ae6c" stroke-width="1.2"/><path d="M3.8 7 H14.6 V9 H3.8 Z" fill="#c98a45"/><path d="M4.4 9 V14.2 M14 9 V14.2 M6.8 9 V12.4 M11.6 9 V12.4" stroke="#b57832" stroke-width="1.4"/></g>
<g transform="translate(9.6,442.80)"><path d="M.4 .8 H18 L16.6 2.8 H1.8 Z" fill="#e8e8e8"/><rect x="8.4" y="2.8" width="1.6" height="5" fill="#d0d0d0"/><ellipse cx="9.2" cy="13.4" rx="9" ry="2.6" fill="#e8b020" opacity=".45"/><path d="M2 12.6 C2.4 8.8 5.6 7.4 9.2 7.4 C12.8 7.4 16 8.8 16.4 12.6 Z" fill="url(#gLamp)"/><ellipse cx="9.2" cy="13" rx="4.4" ry="1.6" fill="#fff8d8"/></g>
<g transform="translate(9.6,465.80)"><path d="M2 13.6 H17 L15.6 15.8 H.6 Z" fill="#e0b070"/><rect x="8.6" y="9" width="1.5" height="5.4" fill="#8a6a4a"/><path d="M9.2 .2 C12.6 .6 14.6 3.4 14 6.4 C14.6 9 12.4 11 9.4 10.8 C6.2 11 4 9 4.6 6.4 C4 3.4 6 .6 9.2 .2 Z" fill="#3f9a2c"/><path d="M9 1.2 C11.4 1.6 12.6 3.2 12.4 5 C10.6 4 8 4.4 6.4 6.2 C5.8 3.6 6.8 1.6 9 1.2 Z" fill="#6cc24a"/></g>
<g transform="translate(9.6,488.80)"><circle cx="9.2" cy="8.2" r="8" fill="#050505" stroke="#c8c8c8" stroke-width="1.2"/><path d="M3.4 5.4 H6.6 V14 A8 8 0 0 1 3.4 11.6 Z M7.8 5.4 H10.8 V15.2 H7.8 Z M12 5.4 H15 V11.6 A8 8 0 0 1 12 14 Z" fill="#ececec"/></g>
<g transform="translate(9.6,534.80)"><path d="M.2 8 L9.4 1.4 L11.2 3.4 L3.2 9.4 Z" fill="#15889c"/><path d="M9.4 1.4 L13.4 1.8 L17.8 10.4 L10.8 13.6 L6.2 5 Z" fill="#19b4d2"/><path d="M10.8 13.6 L17.8 10.4 L17.8 11.4 L10.8 14.8 Z" fill="#0c6a7c"/></g>
<g transform="translate(9.6,557.80)"><path d="M.4 8.6 L10.8 2 L18 7.6 L7.6 14.6 Z" fill="#e6e8f2"/><path d="M2.4 8.6 L10.7 3.4 L16.2 7.6 L7.7 13.2 Z" fill="#2232b0"/><path d="M5 7 L12.4 11 M7.6 5.4 L14.6 9.4 M6.6 11.4 L13.4 6.4" stroke="#5866d0" stroke-width=".6"/><path d="M.4 8.6 L7.6 14.6 L18 7.6 V8.8 L7.6 16 L.4 9.8 Z" fill="#8a90b0"/></g>
<g transform="translate(9.6,603.80)"><path d="M1.6 1 V14 M.2 1.2 H13.4 M.2 14 H10 M12 1 V8" stroke="#f0c890" stroke-width="1.3" fill="none"/><path d="M2 13.6 L11.6 1.6" stroke="#f4f4f4" stroke-width="1.4"/><circle cx="13.6" cy="11" r="3.2" fill="#8ab8f0" stroke="#dce8f8" stroke-width="1"/><path d="M15.8 13.4 L18.6 16.4" stroke="#d8dce2" stroke-width="1.6" stroke-linecap="round"/></g>
<g transform="translate(9.6,626.80)"><rect x=".6" y="1.4" width="11.6" height="12.4" fill="#f6f2ec" stroke="#c87838" stroke-width="1.2"/><rect x=".6" y="1" width="11.6" height="2.2" fill="#c87838"/><path d="M2.6 7 L5.4 10.4 L10.4 4.2" stroke="#d82030" stroke-width="1.8" fill="none"/><circle cx="13.6" cy="11" r="3.2" fill="#8ab8f0" stroke="#dce8f8" stroke-width="1"/><path d="M15.8 13.4 L18.6 16.4" stroke="#d8dce2" stroke-width="1.6" stroke-linecap="round"/></g>
<g transform="translate(34.6,660.2) scale(1.04,.91)"><path d="M14 0 L27.6 6.6 V22.4 L14 29 L.4 22.4 V6.6 Z" fill="url(#gHex)" stroke="#3c4450" stroke-width="1"/><path d="M14 2.6 L25.4 8 V13 L14 19 L2.6 13 V8 Z" fill="#e6e9ec"/><path d="M14 19 V27 M2.6 13 L14 19 L25.4 13" stroke="#9aa0a8" stroke-width=".8" fill="none"/><path d="M2.4 20.6 L14 26.6 L25.6 20.6 L14 16 Z" fill="#7b828a"/><path d="M5.2 12.4 L12.2 9.8 L18.2 12.6 L11 15.6 Z" fill="#b0651c"/><path d="M5.6 12.8 V19 M11 15.8 V22 M17.8 13 V18.4" stroke="#5a3410" stroke-width="1.1"/><path d="M17.6 14.6 L22 12.4 L23.6 17.4 L19.4 19.8 Z" fill="#2b7fd8"/><path d="M17 20.4 L21.6 22.6 M19.8 19.6 V23.6" stroke="#1c4a86" stroke-width="1"/></g>
<ellipse cx="198.3" cy="227.4" rx="13.5" ry="3" fill="url(#gSh)"/><path d="M187.7 206.20000000000002 L199.7 218.3 L188.4 225.20000000000002 Z" fill="#a9d5ee"/><path d="M187.7 206.20000000000002 L190.2 212.8 L190.6 223.60000000000002 L188.4 225.20000000000002 Z" fill="#8cc0e0"/><circle cx="193.5" cy="217.9" r="1.5" fill="#4a5a68"/><path d="M205.2 206.60000000000002 V209.20000000000002 M205.2 209.4 L199 225.60000000000002 M205.2 209.4 L209.4 222.60000000000002" stroke="#eceef0" stroke-width="2.7" stroke-linecap="round" fill="none"/><path d="M202.4 215.20000000000002 L207.6 215.8" stroke="#c8ccd0" stroke-width="1.2"/>
<ellipse cx="198" cy="256.5" rx="13" ry="3.2" fill="url(#gSh)"/><path d="M185.5 236.9 L204.1 235.10000000000002 L204.1 249.20000000000002 L187.3 251.9 Z" fill="#eef3f3"/><path d="M187.4 238.60000000000002 L202.6 237.0 L202.6 247.8 L188.8 250.0 Z" fill="url(#gSheet)"/><path d="M191.20000000000002 238.20000000000002 L192.3 249.45" stroke="#e8f6f6" stroke-width=".7"/><path d="M195.0 237.8 L195.8 248.9" stroke="#e8f6f6" stroke-width=".7"/><path d="M198.8 237.40000000000003 L199.3 248.35" stroke="#e8f6f6" stroke-width=".7"/><path d="M188.25 242.40000000000003 L202.6 240.6" stroke="#e8f6f6" stroke-width=".7"/><path d="M188.70000000000002 246.20000000000002 L202.6 244.2" stroke="#e8f6f6" stroke-width=".7"/><path d="M201.7 240.4 L209.6 244.20000000000002 L209.2 251.9 L199.4 254.20000000000002 L195.7 246.8 Z" fill="none" stroke="#d9a31c" stroke-width="1.5"/><circle cx="201.7" cy="240.4" r="1.9" fill="#ff9f1c"/><circle cx="201.7" cy="240.4" r=".8" fill="#ffd890"/><circle cx="209.6" cy="244.20000000000002" r="1.9" fill="#ff9f1c"/><circle cx="209.6" cy="244.20000000000002" r=".8" fill="#ffd890"/><circle cx="209.2" cy="251.9" r="1.9" fill="#ff9f1c"/><circle cx="209.2" cy="251.9" r=".8" fill="#ffd890"/><circle cx="199.4" cy="254.20000000000002" r="1.9" fill="#ff9f1c"/><circle cx="199.4" cy="254.20000000000002" r=".8" fill="#ffd890"/><circle cx="195.7" cy="246.8" r="1.9" fill="#ff9f1c"/><circle cx="195.7" cy="246.8" r=".8" fill="#ffd890"/>
<ellipse cx="341.5" cy="256.5" rx="13" ry="3.2" fill="url(#gSh)"/><path d="M329.0 236.9 L347.6 235.10000000000002 L347.6 249.20000000000002 L330.8 251.9 Z" fill="#eef3f3"/><path d="M330.9 238.60000000000002 L346.1 237.0 L346.1 247.8 L332.3 250.0 Z" fill="url(#gSheet)"/><path d="M334.7 238.20000000000002 L335.8 249.45" stroke="#e8f6f6" stroke-width=".7"/><path d="M338.5 237.8 L339.3 248.9" stroke="#e8f6f6" stroke-width=".7"/><path d="M342.29999999999995 237.40000000000003 L342.8 248.35" stroke="#e8f6f6" stroke-width=".7"/><path d="M331.75 242.40000000000003 L346.1 240.6" stroke="#e8f6f6" stroke-width=".7"/><path d="M332.2 246.20000000000002 L346.1 244.2" stroke="#e8f6f6" stroke-width=".7"/><path d="M345.2 240.4 L353.1 244.20000000000002 L352.7 251.9 L342.9 254.20000000000002 L339.2 246.8 Z" fill="none" stroke="#d9a31c" stroke-width="1.5"/><circle cx="345.2" cy="240.4" r="1.9" fill="#ff9f1c"/><circle cx="345.2" cy="240.4" r=".8" fill="#ffd890"/><circle cx="353.1" cy="244.20000000000002" r="1.9" fill="#ff9f1c"/><circle cx="353.1" cy="244.20000000000002" r=".8" fill="#ffd890"/><circle cx="352.7" cy="251.9" r="1.9" fill="#ff9f1c"/><circle cx="352.7" cy="251.9" r=".8" fill="#ffd890"/><circle cx="342.9" cy="254.20000000000002" r="1.9" fill="#ff9f1c"/><circle cx="342.9" cy="254.20000000000002" r=".8" fill="#ffd890"/><circle cx="339.2" cy="246.8" r="1.9" fill="#ff9f1c"/><circle cx="339.2" cy="246.8" r=".8" fill="#ffd890"/>
<ellipse cx="198" cy="286.5" rx="13" ry="3.2" fill="url(#gSh)"/><path d="M185.5 266.90000000000003 L204.1 265.1 L204.1 279.2 L187.3 281.90000000000003 Z" fill="#eef3f3"/><path d="M187.4 268.6 L202.6 267.0 L202.6 277.8 L188.8 280.0 Z" fill="url(#gSheet)"/><path d="M191.20000000000002 268.20000000000005 L192.3 279.45" stroke="#e8f6f6" stroke-width=".7"/><path d="M195.0 267.8 L195.8 278.9" stroke="#e8f6f6" stroke-width=".7"/><path d="M198.8 267.40000000000003 L199.3 278.35" stroke="#e8f6f6" stroke-width=".7"/><path d="M188.25 272.40000000000003 L202.6 270.6" stroke="#e8f6f6" stroke-width=".7"/><path d="M188.70000000000002 276.20000000000005 L202.6 274.2" stroke="#e8f6f6" stroke-width=".7"/><path d="M201.7 270.40000000000003 L209.6 274.2 L209.2 281.90000000000003 L199.4 284.2 L195.7 276.8 Z" fill="none" stroke="#d9a31c" stroke-width="1.5"/><circle cx="201.7" cy="270.40000000000003" r="1.9" fill="#ff9f1c"/><circle cx="201.7" cy="270.40000000000003" r=".8" fill="#ffd890"/><circle cx="209.6" cy="274.2" r="1.9" fill="#ff9f1c"/><circle cx="209.6" cy="274.2" r=".8" fill="#ffd890"/><circle cx="209.2" cy="281.90000000000003" r="1.9" fill="#ff9f1c"/><circle cx="209.2" cy="281.90000000000003" r=".8" fill="#ffd890"/><circle cx="199.4" cy="284.2" r="1.9" fill="#ff9f1c"/><circle cx="199.4" cy="284.2" r=".8" fill="#ffd890"/><circle cx="195.7" cy="276.8" r="1.9" fill="#ff9f1c"/><circle cx="195.7" cy="276.8" r=".8" fill="#ffd890"/>
<ellipse cx="341.5" cy="286.5" rx="13" ry="3.2" fill="url(#gSh)"/><path d="M329.0 266.90000000000003 L347.6 265.1 L347.6 279.2 L330.8 281.90000000000003 Z" fill="#eef3f3"/><path d="M330.9 268.6 L346.1 267.0 L346.1 277.8 L332.3 280.0 Z" fill="url(#gSheet)"/><path d="M334.7 268.20000000000005 L335.8 279.45" stroke="#e8f6f6" stroke-width=".7"/><path d="M338.5 267.8 L339.3 278.9" stroke="#e8f6f6" stroke-width=".7"/><path d="M342.29999999999995 267.40000000000003 L342.8 278.35" stroke="#e8f6f6" stroke-width=".7"/><path d="M331.75 272.40000000000003 L346.1 270.6" stroke="#e8f6f6" stroke-width=".7"/><path d="M332.2 276.20000000000005 L346.1 274.2" stroke="#e8f6f6" stroke-width=".7"/><path d="M345.2 270.40000000000003 L353.1 274.2 L352.7 281.90000000000003 L342.9 284.2 L339.2 276.8 Z" fill="none" stroke="#d9a31c" stroke-width="1.5"/><circle cx="345.2" cy="270.40000000000003" r="1.9" fill="#ff9f1c"/><circle cx="345.2" cy="270.40000000000003" r=".8" fill="#ffd890"/><circle cx="353.1" cy="274.2" r="1.9" fill="#ff9f1c"/><circle cx="353.1" cy="274.2" r=".8" fill="#ffd890"/><circle cx="352.7" cy="281.90000000000003" r="1.9" fill="#ff9f1c"/><circle cx="352.7" cy="281.90000000000003" r=".8" fill="#ffd890"/><circle cx="342.9" cy="284.2" r="1.9" fill="#ff9f1c"/><circle cx="342.9" cy="284.2" r=".8" fill="#ffd890"/><circle cx="339.2" cy="276.8" r="1.9" fill="#ff9f1c"/><circle cx="339.2" cy="276.8" r=".8" fill="#ffd890"/>
<ellipse cx="198.2" cy="316.7" rx="13" ry="3.2" fill="url(#gSh)"/><path d="M185.9 298.0 L203.7 294.8 L204.6 309.2 L188.5 311.90000000000003 Z" fill="#f2f4f6"/><path d="M187.6 299.3 L202.3 296.6 L203 308.0 L189.7 310.2 Z" fill="url(#gSky)"/><path d="M189.2 305.2 L193.4 300.40000000000003 L196 303.40000000000003 L198.6 301.6 L202.7 304.40000000000003 L203 308.0 L189.7 310.2 Z" fill="#f4f8fa"/><path d="M189.1 306.2 L192.6 305.0 L196.4 306.2 L200.6 302.8 L202.8 303.6 L203 308.0 L189.7 310.2 Z" fill="#117a2c"/><circle cx="205.1" cy="309.2" r="6.3" fill="#f4f4f4"/><ellipse cx="205.10" cy="305.90" rx="2.7" ry="1.7" fill="#7a3fd8" transform="rotate(-90 205.10 305.90)"/><ellipse cx="207.43" cy="306.87" rx="2.7" ry="1.7" fill="#2f78e8" transform="rotate(-45 207.43 306.87)"/><ellipse cx="208.40" cy="309.20" rx="2.7" ry="1.7" fill="#2fd0a8" transform="rotate(0 208.40 309.20)"/><ellipse cx="207.43" cy="311.53" rx="2.7" ry="1.7" fill="#8edc3c" transform="rotate(45 207.43 311.53)"/><ellipse cx="205.10" cy="312.50" rx="2.7" ry="1.7" fill="#f0a020" transform="rotate(90 205.10 312.50)"/><ellipse cx="202.77" cy="311.53" rx="2.7" ry="1.7" fill="#f03a58" transform="rotate(135 202.77 311.53)"/><ellipse cx="201.80" cy="309.20" rx="2.7" ry="1.7" fill="#e83cc0" transform="rotate(180 201.80 309.20)"/><ellipse cx="202.77" cy="306.87" rx="2.7" ry="1.7" fill="#a040e0" transform="rotate(225 202.77 306.87)"/><circle cx="205.1" cy="309.2" r="1" fill="#fff"/>
<ellipse cx="341.7" cy="316.7" rx="13" ry="3.2" fill="url(#gSh)"/><path d="M329.4 298.0 L347.2 294.8 L348.1 309.2 L332.0 311.90000000000003 Z" fill="#f2f4f6"/><path d="M331.1 299.3 L345.8 296.6 L346.5 308.0 L333.2 310.2 Z" fill="url(#gSky)"/><path d="M332.7 305.2 L336.9 300.40000000000003 L339.5 303.40000000000003 L342.1 301.6 L346.2 304.40000000000003 L346.5 308.0 L333.2 310.2 Z" fill="#f4f8fa"/><path d="M332.6 306.2 L336.1 305.0 L339.9 306.2 L344.1 302.8 L346.3 303.6 L346.5 308.0 L333.2 310.2 Z" fill="#117a2c"/><circle cx="348.6" cy="309.2" r="6.3" fill="#f4f4f4"/><ellipse cx="348.60" cy="305.90" rx="2.7" ry="1.7" fill="#7a3fd8" transform="rotate(-90 348.60 305.90)"/><ellipse cx="350.93" cy="306.87" rx="2.7" ry="1.7" fill="#2f78e8" transform="rotate(-45 350.93 306.87)"/><ellipse cx="351.90" cy="309.20" rx="2.7" ry="1.7" fill="#2fd0a8" transform="rotate(0 351.90 309.20)"/><ellipse cx="350.93" cy="311.53" rx="2.7" ry="1.7" fill="#8edc3c" transform="rotate(45 350.93 311.53)"/><ellipse cx="348.60" cy="312.50" rx="2.7" ry="1.7" fill="#f0a020" transform="rotate(90 348.60 312.50)"/><ellipse cx="346.27" cy="311.53" rx="2.7" ry="1.7" fill="#f03a58" transform="rotate(135 346.27 311.53)"/><ellipse cx="345.30" cy="309.20" rx="2.7" ry="1.7" fill="#e83cc0" transform="rotate(180 345.30 309.20)"/><ellipse cx="346.27" cy="306.87" rx="2.7" ry="1.7" fill="#a040e0" transform="rotate(225 346.27 306.87)"/><circle cx="348.6" cy="309.2" r="1" fill="#fff"/>
<ellipse cx="198.2" cy="346.7" rx="13" ry="3.2" fill="url(#gSh)"/><path d="M185.9 328.0 L203.7 324.8 L204.6 339.2 L188.5 341.90000000000003 Z" fill="#f2f4f6"/><path d="M187.6 329.3 L202.3 326.6 L203 338.0 L189.7 340.2 Z" fill="url(#gSky)"/><path d="M189.2 335.2 L193.4 330.40000000000003 L196 333.40000000000003 L198.6 331.6 L202.7 334.40000000000003 L203 338.0 L189.7 340.2 Z" fill="#f4f8fa"/><path d="M189.1 336.2 L192.6 335.0 L196.4 336.2 L200.6 332.8 L202.8 333.6 L203 338.0 L189.7 340.2 Z" fill="#117a2c"/><circle cx="205.1" cy="339.2" r="6.3" fill="#f4f4f4"/><ellipse cx="205.10" cy="335.90" rx="2.7" ry="1.7" fill="#7a3fd8" transform="rotate(-90 205.10 335.90)"/><ellipse cx="207.43" cy="336.87" rx="2.7" ry="1.7" fill="#2f78e8" transform="rotate(-45 207.43 336.87)"/><ellipse cx="208.40" cy="339.20" rx="2.7" ry="1.7" fill="#2fd0a8" transform="rotate(0 208.40 339.20)"/><ellipse cx="207.43" cy="341.53" rx="2.7" ry="1.7" fill="#8edc3c" transform="rotate(45 207.43 341.53)"/><ellipse cx="205.10" cy="342.50" rx="2.7" ry="1.7" fill="#f0a020" transform="rotate(90 205.10 342.50)"/><ellipse cx="202.77" cy="341.53" rx="2.7" ry="1.7" fill="#f03a58" transform="rotate(135 202.77 341.53)"/><ellipse cx="201.80" cy="339.20" rx="2.7" ry="1.7" fill="#e83cc0" transform="rotate(180 201.80 339.20)"/><ellipse cx="202.77" cy="336.87" rx="2.7" ry="1.7" fill="#a040e0" transform="rotate(225 202.77 336.87)"/><circle cx="205.1" cy="339.2" r="1" fill="#fff"/>
<ellipse cx="341.7" cy="346.7" rx="13" ry="3.2" fill="url(#gSh)"/><path d="M329.4 328.0 L347.2 324.8 L348.1 339.2 L332.0 341.90000000000003 Z" fill="#f2f4f6"/><path d="M331.1 329.3 L345.8 326.6 L346.5 338.0 L333.2 340.2 Z" fill="url(#gSky)"/><path d="M332.7 335.2 L336.9 330.40000000000003 L339.5 333.40000000000003 L342.1 331.6 L346.2 334.40000000000003 L346.5 338.0 L333.2 340.2 Z" fill="#f4f8fa"/><path d="M332.6 336.2 L336.1 335.0 L339.9 336.2 L344.1 332.8 L346.3 333.6 L346.5 338.0 L333.2 340.2 Z" fill="#117a2c"/><circle cx="348.6" cy="339.2" r="6.3" fill="#f4f4f4"/><ellipse cx="348.60" cy="335.90" rx="2.7" ry="1.7" fill="#7a3fd8" transform="rotate(-90 348.60 335.90)"/><ellipse cx="350.93" cy="336.87" rx="2.7" ry="1.7" fill="#2f78e8" transform="rotate(-45 350.93 336.87)"/><ellipse cx="351.90" cy="339.20" rx="2.7" ry="1.7" fill="#2fd0a8" transform="rotate(0 351.90 339.20)"/><ellipse cx="350.93" cy="341.53" rx="2.7" ry="1.7" fill="#8edc3c" transform="rotate(45 350.93 341.53)"/><ellipse cx="348.60" cy="342.50" rx="2.7" ry="1.7" fill="#f0a020" transform="rotate(90 348.60 342.50)"/><ellipse cx="346.27" cy="341.53" rx="2.7" ry="1.7" fill="#f03a58" transform="rotate(135 346.27 341.53)"/><ellipse cx="345.30" cy="339.20" rx="2.7" ry="1.7" fill="#e83cc0" transform="rotate(180 345.30 339.20)"/><ellipse cx="346.27" cy="336.87" rx="2.7" ry="1.7" fill="#a040e0" transform="rotate(225 346.27 336.87)"/><circle cx="348.6" cy="339.2" r="1" fill="#fff"/>
<rect x="190.6" y="360.5" width="21.6" height="21" fill="#22262a" stroke="#dcebd6" stroke-width="1.4"/><rect x="193.4" y="363" width="6.8" height="8.6" fill="#e9b39c"/><rect x="195.8" y="365.8" width="4.4" height="2.2" fill="#6a4a3a"/><rect x="201.6" y="363" width="7.4" height="3.4" fill="#8fd0e2"/><rect x="206.4" y="367.6" width="2.8" height="2.4" fill="#8fd0e2"/><rect x="201.6" y="367.8" width="3.6" height="5.8" fill="#9aa0a6"/><rect x="206.4" y="371.2" width="2.8" height="4.6" fill="#e9b39c"/><rect x="193.4" y="373.2" width="6.8" height="5.8" fill="#90c98a"/><rect x="201.6" y="375" width="4" height="3.6" fill="#9aa0a6"/><rect x="206" y="377.4" width="3.4" height="2" fill="#90c98a"/><path d="M216.2 367.2 L221.8 371.7 L216.2 376.2 Z" fill="#ecd13a"/><path d="M225.6 363.4 H242.6 V375.4 H237.6 V378.8 H225.6 Z M230.6 363.4 V378.8 M225.6 369.2 H242.6 M225.6 374.2 H237.6 M237.6 363.4 V375.4" fill="none" stroke="#86a4ee" stroke-width="1.4"/>
<rect x="190.3" y="420" width="24.6" height="23.2" fill="#000"/><path d="M194.4 422.6 H210.6 Q212 422.6 212 424 V437.6 L208.4 441 H194.4 Q193 441 193 439.6 V424 Q193 422.6 194.4 422.6 Z" fill="none" stroke="#f2e600" stroke-width="1.5"/><path d="M196.4 430 H209.4 V426 H202.6 V436.6 H196.4 Z M202.6 430 V436.6 H208 V430" fill="none" stroke="#f2e600" stroke-width="1.3"/>
<g transform="translate(184.6,461.8)" fill="none" stroke-linecap="round" stroke-linejoin="round"><path d="M5.9 23.2 L22.3 7.1" stroke="#dcdcdc" stroke-width="1.5"/></g>
<g transform="translate(327.7,461.8)" fill="none" stroke-linecap="round" stroke-linejoin="round"><path d="M17.3 5.6 L8.7 12.9 L20.4 15 L12.3 23.2" stroke="#dcdcdc" stroke-width="1.5"/></g>
<g transform="translate(184.6,499)" fill="none" stroke-linecap="round" stroke-linejoin="round"><circle cx="14" cy="15" r="8.2" stroke="#dcdcdc" stroke-width="1.5"/></g>
<g transform="translate(327.7,499)" fill="none" stroke-linecap="round" stroke-linejoin="round"><path d="M7.2 6 H13.2 Q14.3 6 14.3 7.1 V13.3 H21.5 Q22.6 13.3 22.6 14.4 V21.6 Q22.6 22.7 21.5 22.7 H10.1 L5.9 17.5 V7.2 Q5.9 6 7.2 6 Z" stroke="#dcdcdc" stroke-width="1.5"/></g>
<g transform="translate(184.6,536.4)" fill="none" stroke-linecap="round" stroke-linejoin="round"><path d="M4.8 15.3 L9.4 7.1 H18.6 L23.2 15.3 L18.6 23.5 H9.4 Z" stroke="#dcdcdc" stroke-width="1.5"/></g>
<g transform="translate(327.7,536.4)" fill="none" stroke-linecap="round" stroke-linejoin="round"><text x="5.2" y="12.6" font-size="8.6" font-style="italic" font-weight="bold" fill="#e8e8e8" stroke="none" textLength="14.6" lengthAdjust="spacingAndGlyphs">123</text><path d="M5.6 15 V23.6 M22.8 17 V23.6 M5.6 19.4 H22.8" stroke="#dcdcdc" stroke-width="1.2"/><path d="M22 11.6 L15.2 19.4" stroke="#2a9cec" stroke-width="2.8"/><path d="M15 19.6 L13.6 21.4" stroke="#e0a850" stroke-width="2"/></g>
<g transform="translate(184.6,573.6)" fill="none" stroke-linecap="round" stroke-linejoin="round"><path d="M5.8 6.8 H22.4 V22 H5.8 Z M5.8 11.9 H22.4 M5.8 16.9 H22.4 M11.2 6.8 V22" stroke="#dcdcdc" stroke-width="1.4" stroke-linecap="butt"/></g>
<text x="334.7" y="596.18" font-size="20.5" fill="#e4e4e4" textLength="14.6" lengthAdjust="spacingAndGlyphs" >A</text>
<g transform="translate(184.6,629.6)" fill="none" stroke-linecap="round" stroke-linejoin="round"><path d="M5 19.6 L18.9 6.3" stroke="#dcdcdc" stroke-width="1.6"/><path d="M9.4 24.8 L24 10.6" stroke="#e0ac28" stroke-width="1.6"/></g>
<g transform="translate(327.7,629.6)" fill="none" stroke-linecap="round" stroke-linejoin="round"><path d="M4.6 20.8 L15.4 10.6" stroke="#dcdcdc" stroke-width="1.6"/><path d="M16.6 9.4 L20 6.3" stroke="#dcdcdc" stroke-width="1.4" stroke-dasharray="1.4 1.6"/><path d="M13.4 23.2 L22.6 14.8" stroke="#e0ac28" stroke-width="1.6"/><path d="M12 24.4 L12.8 19.8 L16.6 24 Z M24 13.6 L23.2 18.2 L19.4 14 Z" fill="#e0ac28" stroke="none"/></g>
<g transform="translate(184.6,666.8)" fill="none" stroke-linecap="round" stroke-linejoin="round"><path d="M5 19.8 L18.9 5.8" stroke="#dcdcdc" stroke-width="1.6"/><g transform="translate(16.6,18.6) rotate(-38)" stroke="#e0ac28" stroke-width="1.8"><rect x="-7.4" y="-2.5" width="8" height="5" rx="2.5"/><rect x="-.6" y="-2.5" width="8" height="5" rx="2.5"/></g></g>
<g transform="translate(327.7,666.8)" fill="none" stroke-linecap="round" stroke-linejoin="round"><path d="M4.6 21 L9.4 16.4 M14.6 11.4 L20 6.2" stroke="#dcdcdc" stroke-width="1.6"/><g stroke="#e0ac28" stroke-width="1.6"><path d="M8 13.6 L19.4 21.4 M8.6 21.6 L20.4 12.6"/><circle cx="21.6" cy="12.4" r="2.2"/><circle cx="21.2" cy="22" r="2.2"/></g></g>
<g transform="translate(184.6,704.2)" fill="none" stroke-linecap="round" stroke-linejoin="round"><path d="M5.6 7 H12.4 M5.6 7 V15.6" stroke="#e0ac28" stroke-width="1.5" stroke-dasharray="1.6 2" stroke-linecap="butt"/><path d="M5.6 24 V17.6 L16.6 8 H23" stroke="#dcdcdc" stroke-width="1.5"/></g>
<g transform="translate(327.7,704.2)" fill="none" stroke-linecap="round" stroke-linejoin="round"><path d="M7.6 5.8 V24.6 M15.7 5.8 V11.2 H22 M15.7 24.6 V18.7 H22" stroke="#dcdcdc" stroke-width="1.5" stroke-linecap="butt"/></g>
<g transform="translate(184.6,741.4)" fill="none" stroke-linecap="round" stroke-linejoin="round"><path d="M6.4 8.2 V22.7 H22" stroke="#dcdcdc" stroke-width="1.5"/><path d="M5.6 24.2 L23 7.2" stroke="#e0ac28" stroke-width="1.5"/></g>
<g transform="translate(327.7,741.4)" fill="none" stroke-linecap="round" stroke-linejoin="round"><path d="M5.8 23.6 L24.2 6" stroke="#cfcfcf" stroke-width="1.5"/><path d="M7.6 19 L11 22.4 M12.6 14.2 L16 17.6 M17.6 9.4 L21 12.8 M21.6 5.4 L24.8 8.6" stroke="#e0ac28" stroke-width="1.3"/></g>
<g transform="translate(184.6,778.8)" fill="none" stroke-linecap="round" stroke-linejoin="round"><path d="M4.6 22.5 H23.6" stroke="#dcdcdc" stroke-width="1.5"/><path d="M4.8 22.3 L19 9" stroke="#e0ac28" stroke-width="1.5"/><path d="M19 9 Q21.4 15 21.2 22.2" stroke="#dcdcdc" stroke-width="1.3"/></g>
<g transform="translate(327.7,778.8)" fill="none" stroke-linecap="round" stroke-linejoin="round"><path d="M5.4 9.4 H14.2 M20.9 14.6 V24" stroke="#dcdcdc" stroke-width="1.5" stroke-linecap="butt"/><path d="M7.4 23 L22.6 7.8" stroke="#e0ac28" stroke-width="1.5"/><circle cx="7.2" cy="23.2" r="1.7" fill="#e0ac28" stroke="none"/><circle cx="22.8" cy="7.6" r="1.7" fill="#e0ac28" stroke="none"/></g>
<g><path d="M190.2 846.4 L201.4 841.4 L212.6 846.4 L201.4 851.8 Z" fill="#7f8388"/><path d="M190.2 842 L201.4 837 L212.6 842 L201.4 847.4 Z" fill="#a7abb0"/><path d="M190.2 836.2 L201.4 831 L212.6 836.2 L201.4 841.8 Z" fill="#e6b53e"/><path d="M194.4 836.2 L201.4 833 L208.4 836.2 L201.4 839.6 Z" fill="#c8921e"/><path d="M216 836.4 L221.6 841 L216 845.6 Z" fill="#ecd13a"/><path d="M235.6 830.2 L246.6 836.2 V846 L235 852 L223.8 846 V836.2 Z" fill="#f2f3f5"/><path d="M223.8 846 L235 840.4 L246.6 846 L235 852 Z" fill="#f0c080"/><path d="M235 840.4 V852 L246.6 846 V836.2 Z" fill="#d9dce0" opacity=".55"/><path d="M228 838 L233 835.4 V840.6 L228 843 Z" fill="#6fb0e8"/><path d="M223.8 836.2 L235.6 830.2 L246.6 836.2" fill="none" stroke="#fff" stroke-width="1.6"/></g>
<g shape-rendering="crispEdges" fill="#777"><rect x="0" y="0" width="1642" height="1"/><rect x="0" y="0" width="1" height="936"/><rect x="1641" y="0" width="1" height="936"/><rect x="0" y="935" width="1642" height="1"/></g>
</svg>
</div></body></html>
